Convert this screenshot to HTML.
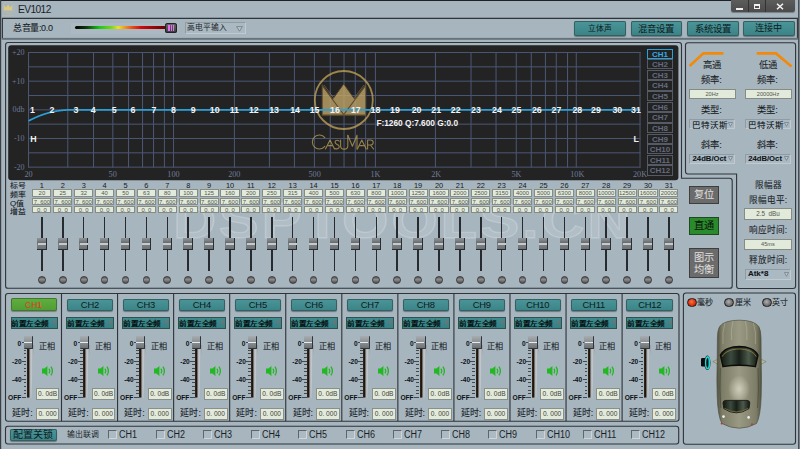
<!DOCTYPE html>
<html lang="zh-CN"><head><meta charset="utf-8"><style>
*{margin:0;padding:0;box-sizing:border-box}
html,body{width:800px;height:449px;overflow:hidden;background:#a7b5bf;font-family:"Liberation Sans", sans-serif;color:#1a1f26}
.ab{position:absolute}
.t{position:absolute;white-space:nowrap;line-height:1}
.c{text-align:center}
.btn{position:absolute;border-radius:2px;background:linear-gradient(#4b9699,#3a8285);box-shadow:0 0 0 1px #346062 inset, 0 1px 1px rgba(0,0,0,.35);color:#0e1a1e;text-align:center;white-space:nowrap}
.box{position:absolute;background:#e1eadb;border:1px solid #868c84;color:#55564c;text-align:center;line-height:1;white-space:nowrap}
.k{-webkit-text-stroke:.08px currentColor}
.sx{transform-origin:0 0}
.dd{position:absolute;border:1px solid;border-color:#8e9ca5 #c0cad0 #c0cad0 #8e9ca5;background:#abb9c3}
</style></head><body>

<svg class="ab" style="left:0;top:0" width="800" height="449" viewBox="0 0 800 449">
<rect x="0" y="0" width="731" height="1" fill="#1e2226"/>
<rect x="0" y="0" width="1.2" height="449" fill="#3a4045"/>
<rect x="798.2" y="0" width="1.2" height="449" fill="#2e3338"/>
<path d="M2.4 39 L2.4 18.4 L797.4 18.4 L797.4 39" fill="none" stroke="#2f3438" stroke-width="1.1"/>
<rect x="1.9" y="37.9" width="796" height="1.9" fill="#65727a"/>
<path d="M5.6 45 Q5.6 42.5 8 42.5 L679 42.5 Q681.5 42.5 681.5 45 L681.5 178.3 L729.5 178.3 Q732.2 178.3 732.2 181 L732.2 286 Q732.2 288.3 729.8 288.3 L8 288.3 Q5.6 288.3 5.6 286 Z" fill="none" stroke="#2f3438" stroke-width="1.1"/>
<path d="M685.5 45.2 Q685.5 42.7 688 42.7 L793 42.7 Q795.6 42.7 795.6 45.2 L795.6 286 Q795.6 288.5 793 288.5 L739 288.5 Q736.6 288.5 736.6 286 L736.6 174 L688 174 Q685.5 174 685.5 171.5 Z" fill="none" stroke="#2f3438" stroke-width="1.1"/>
<path d="M5.5 296 Q5.5 293.5 8 293.5 L676.5 293.5 Q679 293.5 679 296 L679 418.8 Q679 421.2 676.5 421.2 L8 421.2 Q5.5 421.2 5.5 418.8 Z" fill="none" stroke="#2f3438" stroke-width="1.1"/>
<path d="M5.5 428.7 Q5.5 426.3 8 426.3 L676.3 426.3 Q678.7 426.3 678.7 428.7 L678.7 441.5 Q678.7 444 676.3 444 L8 444 Q5.5 444 5.5 441.5 Z" fill="none" stroke="#2f3438" stroke-width="1.1"/>
<path d="M683.4 295.5 Q683.4 293 686 293 L793 293 Q795.5 293 795.5 295.5 L795.5 441.7 Q795.5 444.2 793 444.2 L686 444.2 Q683.4 444.2 683.4 441.7 Z" fill="none" stroke="#2f3438" stroke-width="1.1"/>
<rect x="60.95" y="293.5" width="1.1" height="127.7" fill="#2f3438"/>
<rect x="117.01" y="293.5" width="1.1" height="127.7" fill="#2f3438"/>
<rect x="173.07" y="293.5" width="1.1" height="127.7" fill="#2f3438"/>
<rect x="229.13" y="293.5" width="1.1" height="127.7" fill="#2f3438"/>
<rect x="285.19" y="293.5" width="1.1" height="127.7" fill="#2f3438"/>
<rect x="341.25" y="293.5" width="1.1" height="127.7" fill="#2f3438"/>
<rect x="397.31" y="293.5" width="1.1" height="127.7" fill="#2f3438"/>
<rect x="453.37" y="293.5" width="1.1" height="127.7" fill="#2f3438"/>
<rect x="509.43" y="293.5" width="1.1" height="127.7" fill="#2f3438"/>
<rect x="565.49" y="293.5" width="1.1" height="127.7" fill="#2f3438"/>
<rect x="621.55" y="293.5" width="1.1" height="127.7" fill="#2f3438"/>
<rect x="8.2" y="45.2" width="670.2" height="135" rx="3" fill="#232323"/>
<rect x="28" y="51.98" width="612.5" height="1.05" fill="#4a5572"/>
<rect x="28" y="66.31" width="612.5" height="1.05" fill="#4a5572"/>
<rect x="28" y="80.64" width="612.5" height="1.05" fill="#4a5572"/>
<rect x="28" y="94.97" width="612.5" height="1.05" fill="#4a5572"/>
<rect x="28" y="109.30" width="612.5" height="1.05" fill="#4a5572"/>
<rect x="28" y="123.63" width="612.5" height="1.05" fill="#4a5572"/>
<rect x="28" y="137.96" width="612.5" height="1.05" fill="#4a5572"/>
<rect x="28" y="152.29" width="612.5" height="1.05" fill="#4a5572"/>
<rect x="28" y="166.62" width="612.5" height="1.05" fill="#4a5572"/>
<rect x="28" y="52" width="1.05" height="115.6" fill="#4a5572"/>
<rect x="639.5" y="52" width="1.05" height="115.6" fill="#4a5572"/>
<rect x="67.25" y="52" width="1.05" height="115.6" fill="#4a5572"/>
<rect x="93.00" y="52" width="1.05" height="115.6" fill="#4a5572"/>
<rect x="112.30" y="52" width="1.05" height="115.6" fill="#4a5572"/>
<rect x="128.00" y="52" width="1.05" height="115.6" fill="#4a5572"/>
<rect x="142.00" y="52" width="1.05" height="115.6" fill="#4a5572"/>
<rect x="153.00" y="52" width="1.05" height="115.6" fill="#4a5572"/>
<rect x="163.90" y="52" width="1.05" height="115.6" fill="#4a5572"/>
<rect x="173.00" y="52" width="1.05" height="115.6" fill="#4a5572"/>
<rect x="233.90" y="52" width="1.05" height="115.6" fill="#4a5572"/>
<rect x="268.90" y="52" width="1.05" height="115.6" fill="#4a5572"/>
<rect x="293.90" y="52" width="1.05" height="115.6" fill="#4a5572"/>
<rect x="313.90" y="52" width="1.05" height="115.6" fill="#4a5572"/>
<rect x="329.75" y="52" width="1.05" height="115.6" fill="#4a5572"/>
<rect x="343.50" y="52" width="1.05" height="115.6" fill="#4a5572"/>
<rect x="354.75" y="52" width="1.05" height="115.6" fill="#4a5572"/>
<rect x="365.10" y="52" width="1.05" height="115.6" fill="#4a5572"/>
<rect x="374.90" y="52" width="1.05" height="115.6" fill="#4a5572"/>
<rect x="434.90" y="52" width="1.05" height="115.6" fill="#4a5572"/>
<rect x="470.50" y="52" width="1.05" height="115.6" fill="#4a5572"/>
<rect x="495.50" y="52" width="1.05" height="115.6" fill="#4a5572"/>
<rect x="515.75" y="52" width="1.05" height="115.6" fill="#4a5572"/>
<rect x="530.75" y="52" width="1.05" height="115.6" fill="#4a5572"/>
<rect x="544.90" y="52" width="1.05" height="115.6" fill="#4a5572"/>
<rect x="555.75" y="52" width="1.05" height="115.6" fill="#4a5572"/>
<rect x="567.00" y="52" width="1.05" height="115.6" fill="#4a5572"/>
<rect x="575.75" y="52" width="1.05" height="115.6" fill="#4a5572"/>
<g opacity=".78">
<circle cx="343.8" cy="100" r="29" fill="none" stroke="#c0a25a" stroke-width="1.8"/>
<path d="M322.1 84.5 L332.8 99.1 L343.7 84 L354.6 99.1 L365.8 84.5 L365.8 115.6 L322.1 115.6Z" fill="#c4a86a" stroke="#5a4826" stroke-width="1"/>
<path d="M322.6 86 L343.7 114.5 L365.3 86" fill="none" stroke="#6a5530" stroke-width="1.1"/>
<path d="M324 85 L343.7 111.5 L364 85" fill="none" stroke="#b8a070" stroke-width=".5"/>
<path d="M322.5 115 L365.5 115" stroke="#6a5530" stroke-width="1.2"/>
<g fill="none" stroke="#b89c56" stroke-width="1.1" stroke-linecap="round" stroke-linejoin="round">
<path d="M324.8 137.6 A7 7 0 1 0 324.8 146.4"/>
<path d="M325.5 149 L330 140 L334.5 149 M327.4 145.6 L332.6 145.6"/>
<path d="M339.2 141.2 Q337.5 139.6 335.8 140.6 Q334.6 141.8 335.6 143.4 Q336.6 144.4 338.2 145 Q339.6 146 339 147.8 Q337.8 149.6 334.8 148.4"/>
<path d="M340.6 140 L340.6 146 Q340.6 149.1 344.2 149.1 Q347.8 149.1 347.8 146 L347.8 135.2"/>
<path d="M347.8 135.2 L352.4 146.2 L357 135.2 L357 149"/>
<path d="M357.4 149 L361.8 140 L366.2 149 M359.3 145.6 L364.3 145.6"/>
<path d="M367.6 149 L367.6 140 L370.6 140 Q373.2 140 373.2 142.5 Q373.2 145 370.6 145 L367.6 145 M370.4 145 L373.6 149"/>
</g></g>
<path d="M28.50 121.00 L28.80 120.84 L29.10 120.67 L29.40 120.51 L29.70 120.35 L30.00 120.20 L30.30 120.04 L30.60 119.88 L30.90 119.73 L31.20 119.57 L31.50 119.42 L31.80 119.27 L32.10 119.12 L32.40 118.97 L32.70 118.83 L33.00 118.68 L33.30 118.54 L33.60 118.40 L33.90 118.25 L34.20 118.11 L34.50 117.98 L34.80 117.84 L35.10 117.70 L35.40 117.57 L35.70 117.43 L36.00 117.30 L36.30 117.17 L36.60 117.04 L36.90 116.91 L37.20 116.78 L37.50 116.66 L37.80 116.53 L38.10 116.41 L38.40 116.28 L38.70 116.16 L39.00 116.04 L39.30 115.92 L39.60 115.81 L39.90 115.69 L40.20 115.57 L40.50 115.46 L40.80 115.35 L41.10 115.24 L41.40 115.13 L41.70 115.02 L42.00 114.91 L42.30 114.80 L42.60 114.70 L42.90 114.59 L43.20 114.49 L43.50 114.39 L43.80 114.29 L44.10 114.19 L44.40 114.09 L44.70 114.00 L45.00 113.90 L45.30 113.81 L45.60 113.71 L45.90 113.62 L46.20 113.53 L46.50 113.44 L46.80 113.35 L47.10 113.26 L47.40 113.18 L47.70 113.09 L48.00 113.01 L48.30 112.93 L48.60 112.85 L48.90 112.77 L49.20 112.69 L49.50 112.61 L49.80 112.53 L50.10 112.46 L50.40 112.38 L50.70 112.31 L51.00 112.24 L51.30 112.17 L51.60 112.10 L51.90 112.03 L52.20 111.96 L52.50 111.89 L52.80 111.83 L53.10 111.76 L53.40 111.70 L53.70 111.64 L54.00 111.58 L54.30 111.52 L54.60 111.46 L54.90 111.40 L55.20 111.35 L55.50 111.29 L55.80 111.24 L56.10 111.18 L56.40 111.13 L56.70 111.08 L57.00 111.03 L57.30 110.98 L57.60 110.94 L57.90 110.89 L58.20 110.84 L58.50 110.80 L58.80 110.76 L59.10 110.71 L59.40 110.67 L59.70 110.63 L60.00 110.59 L60.30 110.55 L60.60 110.52 L60.90 110.48 L61.20 110.45 L61.50 110.41 L61.80 110.38 L62.10 110.35 L62.40 110.32 L62.70 110.28 L63.00 110.26 L63.30 110.23 L63.60 110.20 L63.90 110.17 L64.20 110.15 L64.50 110.12 L64.80 110.10 L65.10 110.08 L65.40 110.06 L65.70 110.04 L66.00 110.02 L66.30 110.00 L66.60 109.98 L66.90 109.96 L67.20 109.95 L67.50 109.93 L67.80 109.92 L68.10 109.91 L68.40 109.89 L68.70 109.88 L69.00 109.87 L69.30 109.86 L69.60 109.85 L69.90 109.84 L70.20 109.84 L70.50 109.83 L70.80 109.82 L71.10 109.82 L71.40 109.81 L71.70 109.81 L72.00 109.81 L72.30 109.80 L72.60 109.80 L72.90 109.80 L73.20 109.80 L73.50 109.80 L73.80 109.80 L74.10 109.80 L74.40 109.80 L74.70 109.80 L75.00 109.80 L75.30 109.80 L75.60 109.80 L75.90 109.80 L76.20 109.80 L640 109.8" fill="none" stroke="#2b9fd6" stroke-width="1.7"/>
<path d="M689.6 66 L703.4 53.4 L723.4 53.4" fill="none" stroke="#f28a08" stroke-width="2.6"/><path d="M756.7 53.4 L776 53.4 L791.5 66.5" fill="none" stroke="#f28a08" stroke-width="2.6"/>
</svg>
<svg class="ab" style="left:0;top:0" width="18" height="18" viewBox="0 0 18 18"><circle cx="8.6" cy="7.35" r="5.8" fill="none" stroke="#d4c48a" stroke-width=".7" opacity=".6"/><path d="M3.9 5 L6 7.6 L8.1 4.4 L10.2 7.6 L12.3 5 L12.3 10.5 L3.9 10.5Z" fill="#e2cc7a" opacity=".9"/><rect x="2.6" y="14.8" width="11.4" height="1.6" fill="#cfc08a" opacity=".35"/></svg>
<div class="t" style="left:17.9px;top:4.6px;font-size:10.2px;letter-spacing:-.55px;color:#1a1f26">EV1012</div>
<div class="ab" style="left:730.5px;top:0;width:64.8px;height:12.3px;background:linear-gradient(#5c5c5c,#4b4b4b);border-radius:0 0 2px 2px;box-shadow:0 1px 1px rgba(0,0,0,.3)"></div>
<div class="ab" style="left:748px;top:0;width:1px;height:12px;background:#333"></div>
<div class="ab" style="left:765px;top:0;width:1px;height:12px;background:#333"></div>
<div class="ab" style="left:736px;top:7.5px;width:6.5px;height:2px;background:#f0f0f0"></div>
<div class="ab" style="left:753.8px;top:4px;width:6.3px;height:5px;border:1px solid #f0f0f0;border-top-width:2px"></div>
<svg class="ab" style="left:776px;top:3.3px" width="8" height="7" viewBox="0 0 8 7"><path d="M1 .7 L7 6.3 M7 .7 L1 6.3" stroke="#f4f4f4" stroke-width="1.5"/></svg>
<div class="t k" style="left:12.9px;top:24.3px;font-size:9px;letter-spacing:-.32px;color:#1a1f26">总音量:0.0</div>
<div class="ab" style="left:71px;top:22.5px;width:108px;height:11px;background:rgba(255,255,255,.06)"></div>
<div class="ab" style="left:75px;top:26.4px;width:92px;height:3px;border-radius:1.5px;background:linear-gradient(90deg,#000 0%,#0a3a0a 12%,#1cc81c 27%,#7ad81a 40%,#f0e020 47%,#e8501a 62%,#d00a0a 72%,#600000 100%)"></div>
<div class="ab" style="left:165.3px;top:23px;width:11.7px;height:9.8px;border-radius:2.5px;background:linear-gradient(#6a6a6a,#3c3c3c);box-shadow:0 0 0 1px #222 inset"></div>
<div class="ab" style="left:168.3px;top:25.1px;width:1.5px;height:5.6px;background:#e070f0"></div>
<div class="ab" style="left:170.5px;top:25.1px;width:1.5px;height:5.6px;background:#e070f0"></div>
<div class="ab" style="left:172.7px;top:25.1px;width:1.5px;height:5.6px;background:#e070f0"></div>
<div class="dd" style="left:184.8px;top:22px;width:60.8px;height:11.7px"></div>
<div class="t" style="left:186.6px;top:23.6px;font-size:7.8px;color:#1a1f26">高电平输入</div>
<svg class="ab" style="left:236px;top:25.6px" width="7" height="6" viewBox="0 0 7 6"><path d="M0.6 .6 L6.4 .6 L3.5 5.2Z" fill="#b8c2c8" stroke="#6f7b84" stroke-width=".8"/></svg>
<div class="btn" style="left:574px;top:20.8px;width:52.0px;height:15px;line-height:15px;font-size:7.8px">立体声</div>
<div class="btn" style="left:630.5px;top:20.8px;width:51.5px;height:15px;line-height:15px;font-size:9.4px">混音设置</div>
<div class="btn" style="left:687px;top:20.8px;width:51.5px;height:15px;line-height:15px;font-size:9.4px">系统设置</div>
<div class="btn" style="left:743.2px;top:20.8px;width:51.5px;height:15px;line-height:15px;font-size:9.1px">连接中</div>
<div class="t" style="left:0;width:24.6px;text-align:right;top:48.9px;font-size:8px;font-family:'Liberation Serif',serif;color:#6c7896">+20</div>
<div class="t" style="left:0;width:24.6px;text-align:right;top:77.6px;font-size:8px;font-family:'Liberation Serif',serif;color:#6c7896">+10</div>
<div class="t" style="left:0;width:24.6px;text-align:right;top:106.2px;font-size:8px;font-family:'Liberation Serif',serif;color:#6c7896">0db</div>
<div class="t" style="left:0;width:24.6px;text-align:right;top:134.9px;font-size:8px;font-family:'Liberation Serif',serif;color:#6c7896">-10</div>
<div class="t" style="left:0;width:24.6px;text-align:right;top:163.5px;font-size:8px;font-family:'Liberation Serif',serif;color:#6c7896">-20</div>
<div class="t c" style="left:8.5px;width:40px;top:170.7px;font-size:8.2px;font-family:'Liberation Serif',serif;color:#6f7c99">20</div>
<div class="t c" style="left:92.7px;width:40px;top:170.7px;font-size:8.2px;font-family:'Liberation Serif',serif;color:#6f7c99">50</div>
<div class="t c" style="left:153.5px;width:40px;top:170.7px;font-size:8.2px;font-family:'Liberation Serif',serif;color:#6f7c99">100</div>
<div class="t c" style="left:214.3px;width:40px;top:170.7px;font-size:8.2px;font-family:'Liberation Serif',serif;color:#6f7c99">200</div>
<div class="t c" style="left:294.6px;width:40px;top:170.7px;font-size:8.2px;font-family:'Liberation Serif',serif;color:#6f7c99">500</div>
<div class="t c" style="left:355.4px;width:40px;top:170.7px;font-size:8.2px;font-family:'Liberation Serif',serif;color:#6f7c99">1K</div>
<div class="t c" style="left:416.2px;width:40px;top:170.7px;font-size:8.2px;font-family:'Liberation Serif',serif;color:#6f7c99">2K</div>
<div class="t c" style="left:496.5px;width:40px;top:170.7px;font-size:8.2px;font-family:'Liberation Serif',serif;color:#6f7c99">5K</div>
<div class="t c" style="left:557.3px;width:40px;top:170.7px;font-size:8.2px;font-family:'Liberation Serif',serif;color:#6f7c99">10K</div>
<div class="t c" style="left:620.0px;width:40px;top:170.7px;font-size:8.2px;font-family:'Liberation Serif',serif;color:#6f7c99">20K</div>
<div class="t c" style="left:22.4px;width:20px;top:106.1px;font-size:8.8px;font-weight:bold;color:#f4f4f4">1</div>
<div class="t c" style="left:41.9px;width:20px;top:106.1px;font-size:8.8px;font-weight:bold;color:#f4f4f4">2</div>
<div class="t c" style="left:66.0px;width:20px;top:106.1px;font-size:8.8px;font-weight:bold;color:#f4f4f4">3</div>
<div class="t c" style="left:83.2px;width:20px;top:106.1px;font-size:8.8px;font-weight:bold;color:#f4f4f4">4</div>
<div class="t c" style="left:104.1px;width:20px;top:106.1px;font-size:8.8px;font-weight:bold;color:#f4f4f4">5</div>
<div class="t c" style="left:123.0px;width:20px;top:106.1px;font-size:8.8px;font-weight:bold;color:#f4f4f4">6</div>
<div class="t c" style="left:143.9px;width:20px;top:106.1px;font-size:8.8px;font-weight:bold;color:#f4f4f4">7</div>
<div class="t c" style="left:163.5px;width:20px;top:106.1px;font-size:8.8px;font-weight:bold;color:#f4f4f4">8</div>
<div class="t c" style="left:183.1px;width:20px;top:106.1px;font-size:8.8px;font-weight:bold;color:#f4f4f4">9</div>
<div class="t c" style="left:204.7px;width:20px;top:106.1px;font-size:8.8px;font-weight:bold;color:#f4f4f4">10</div>
<div class="t c" style="left:224.3px;width:20px;top:106.1px;font-size:8.8px;font-weight:bold;color:#f4f4f4">11</div>
<div class="t c" style="left:243.8px;width:20px;top:106.1px;font-size:8.8px;font-weight:bold;color:#f4f4f4">12</div>
<div class="t c" style="left:264.1px;width:20px;top:106.1px;font-size:8.8px;font-weight:bold;color:#f4f4f4">13</div>
<div class="t c" style="left:285.1px;width:20px;top:106.1px;font-size:8.8px;font-weight:bold;color:#f4f4f4">14</div>
<div class="t c" style="left:304.6px;width:20px;top:106.1px;font-size:8.8px;font-weight:bold;color:#f4f4f4">15</div>
<div class="t c" style="left:324.9px;width:20px;top:106.1px;font-size:8.8px;font-weight:bold;color:#f4f4f4">16</div>
<div class="t c" style="left:345.8px;width:20px;top:106.1px;font-size:8.8px;font-weight:bold;color:#f4f4f4">17</div>
<div class="t c" style="left:365.4px;width:20px;top:106.1px;font-size:8.8px;font-weight:bold;color:#f4f4f4">18</div>
<div class="t c" style="left:385.0px;width:20px;top:106.1px;font-size:8.8px;font-weight:bold;color:#f4f4f4">19</div>
<div class="t c" style="left:406.6px;width:20px;top:106.1px;font-size:8.8px;font-weight:bold;color:#f4f4f4">20</div>
<div class="t c" style="left:426.2px;width:20px;top:106.1px;font-size:8.8px;font-weight:bold;color:#f4f4f4">21</div>
<div class="t c" style="left:445.7px;width:20px;top:106.1px;font-size:8.8px;font-weight:bold;color:#f4f4f4">22</div>
<div class="t c" style="left:466.0px;width:20px;top:106.1px;font-size:8.8px;font-weight:bold;color:#f4f4f4">23</div>
<div class="t c" style="left:487.0px;width:20px;top:106.1px;font-size:8.8px;font-weight:bold;color:#f4f4f4">24</div>
<div class="t c" style="left:506.5px;width:20px;top:106.1px;font-size:8.8px;font-weight:bold;color:#f4f4f4">25</div>
<div class="t c" style="left:526.8px;width:20px;top:106.1px;font-size:8.8px;font-weight:bold;color:#f4f4f4">26</div>
<div class="t c" style="left:546.5px;width:20px;top:106.1px;font-size:8.8px;font-weight:bold;color:#f4f4f4">27</div>
<div class="t c" style="left:567.3px;width:20px;top:106.1px;font-size:8.8px;font-weight:bold;color:#f4f4f4">28</div>
<div class="t c" style="left:585.9px;width:20px;top:106.1px;font-size:8.8px;font-weight:bold;color:#f4f4f4">29</div>
<div class="t c" style="left:607.3px;width:20px;top:106.1px;font-size:8.8px;font-weight:bold;color:#f4f4f4">30</div>
<div class="t c" style="left:626.0px;width:20px;top:106.1px;font-size:8.8px;font-weight:bold;color:#f4f4f4">31</div>
<div class="t" style="left:30.2px;top:134.6px;font-size:8.8px;font-weight:bold;color:#f2f2f2">H</div>
<div class="t" style="left:633.6px;top:134.6px;font-size:8.8px;font-weight:bold;color:#f2f2f2">L</div>
<div class="t" style="left:376.4px;top:118.6px;font-size:8.3px;font-weight:bold;color:#f2f2f2">F:1260 Q:7.600 G:0.0</div>
<div class="ab c" style="left:647px;top:48.60px;width:26px;height:10.2px;border:1.1px solid #2aa0d8;color:#32ace6;font-size:8px;font-weight:bold;line-height:9.2px">CH1</div>
<div class="ab c" style="left:647px;top:59.22px;width:26px;height:10.2px;border:1.1px solid #545a66;color:#646b7d;font-size:8px;font-weight:bold;line-height:9.2px">CH2</div>
<div class="ab c" style="left:647px;top:69.84px;width:26px;height:10.2px;border:1.1px solid #545a66;color:#646b7d;font-size:8px;font-weight:bold;line-height:9.2px">CH3</div>
<div class="ab c" style="left:647px;top:80.46px;width:26px;height:10.2px;border:1.1px solid #545a66;color:#646b7d;font-size:8px;font-weight:bold;line-height:9.2px">CH4</div>
<div class="ab c" style="left:647px;top:91.08px;width:26px;height:10.2px;border:1.1px solid #545a66;color:#646b7d;font-size:8px;font-weight:bold;line-height:9.2px">CH5</div>
<div class="ab c" style="left:647px;top:101.70px;width:26px;height:10.2px;border:1.1px solid #545a66;color:#646b7d;font-size:8px;font-weight:bold;line-height:9.2px">CH6</div>
<div class="ab c" style="left:647px;top:112.32px;width:26px;height:10.2px;border:1.1px solid #545a66;color:#646b7d;font-size:8px;font-weight:bold;line-height:9.2px">CH7</div>
<div class="ab c" style="left:647px;top:122.94px;width:26px;height:10.2px;border:1.1px solid #545a66;color:#646b7d;font-size:8px;font-weight:bold;line-height:9.2px">CH8</div>
<div class="ab c" style="left:647px;top:133.56px;width:26px;height:10.2px;border:1.1px solid #545a66;color:#646b7d;font-size:8px;font-weight:bold;line-height:9.2px">CH9</div>
<div class="ab c" style="left:647px;top:144.18px;width:26px;height:10.2px;border:1.1px solid #545a66;color:#646b7d;font-size:8px;font-weight:bold;line-height:9.2px">CH10</div>
<div class="ab c" style="left:647px;top:154.80px;width:26px;height:10.2px;border:1.1px solid #545a66;color:#646b7d;font-size:8px;font-weight:bold;line-height:9.2px">CH11</div>
<div class="ab c" style="left:647px;top:165.42px;width:26px;height:10.2px;border:1.1px solid #545a66;color:#646b7d;font-size:8px;font-weight:bold;line-height:9.2px">CH12</div>
<div class="t c k" style="left:691.5px;width:40px;top:60.5px;font-size:9.3px">高通</div>
<div class="t c k" style="left:691.5px;width:40px;top:75.9px;font-size:9.3px">频率:</div>
<div class="t c k" style="left:691.5px;width:40px;top:105.6px;font-size:9.3px">类型:</div>
<div class="t c k" style="left:691.5px;width:40px;top:141.2px;font-size:9.3px">斜率:</div>
<div class="t c k" style="left:747.5px;width:40px;top:60.5px;font-size:9.3px">低通</div>
<div class="t c k" style="left:747.5px;width:40px;top:75.9px;font-size:9.3px">频率:</div>
<div class="t c k" style="left:747.5px;width:40px;top:105.6px;font-size:9.3px">类型:</div>
<div class="t c k" style="left:747.5px;width:40px;top:141.2px;font-size:9.3px">斜率:</div>
<div class="box" style="left:688.5px;top:88.6px;width:47px;height:10.8px;font-size:5.6px;line-height:8.8px">20Hz</div>
<div class="box" style="left:744.5px;top:88.6px;width:47px;height:10.8px;font-size:5.6px;line-height:8.8px">20000Hz</div>
<div class="dd" style="left:689.4px;top:119.3px;width:45.8px;height:9.9px"></div>
<div class="t k" style="left:692.1999999999999px;top:121.2px;font-size:8.5px;font-weight:normal;color:#101418">巴特沃斯</div>
<svg class="ab" style="left:727.9999999999999px;top:121.95px" width="5" height="5" viewBox="0 0 5 5"><path d="M.4 .5 L4.6 .5 L2.5 4.4Z" fill="#b8c2c8" stroke="#6f7b84" stroke-width=".7"/></svg>
<div class="dd" style="left:745px;top:119.3px;width:46px;height:9.9px"></div>
<div class="t k" style="left:747.8px;top:121.2px;font-size:8.5px;font-weight:normal;color:#101418">巴特沃斯</div>
<svg class="ab" style="left:783.8px;top:121.95px" width="5" height="5" viewBox="0 0 5 5"><path d="M.4 .5 L4.6 .5 L2.5 4.4Z" fill="#b8c2c8" stroke="#6f7b84" stroke-width=".7"/></svg>
<div class="dd" style="left:689.4px;top:153.5px;width:45.8px;height:10.4px"></div>
<div class="t k" style="left:692.6px;top:155.1px;font-size:7.7px;font-weight:bold;color:#101418">24dB/Oct</div>
<svg class="ab" style="left:727.9999999999999px;top:156.39999999999998px" width="5" height="5" viewBox="0 0 5 5"><path d="M.4 .5 L4.6 .5 L2.5 4.4Z" fill="#b8c2c8" stroke="#6f7b84" stroke-width=".7"/></svg>
<div class="dd" style="left:745px;top:153.5px;width:46px;height:10.4px"></div>
<div class="t k" style="left:748.2px;top:155.1px;font-size:7.7px;font-weight:bold;color:#101418">24dB/Oct</div>
<svg class="ab" style="left:783.8px;top:156.39999999999998px" width="5" height="5" viewBox="0 0 5 5"><path d="M.4 .5 L4.6 .5 L2.5 4.4Z" fill="#b8c2c8" stroke="#6f7b84" stroke-width=".7"/></svg>
<div class="t c k" style="left:738px;width:60px;top:181.0px;font-size:8.6px">限幅器</div>
<div class="t c k" style="left:738px;width:60px;top:195.8px;font-size:8.6px">限幅电平:</div>
<div class="t c k" style="left:738px;width:60px;top:225.9px;font-size:8.6px">响应时间:</div>
<div class="t c k" style="left:738px;width:60px;top:256.2px;font-size:8.6px">释放时间:</div>
<div class="box" style="left:744.3px;top:208.2px;width:47.3px;height:11.7px;font-size:6.3px;line-height:9.8px">2.5&nbsp; dBu</div>
<div class="box" style="left:744.3px;top:238.6px;width:47.3px;height:11.4px;font-size:5.6px;line-height:9.6px">45ms</div>
<div class="dd" style="left:745.3px;top:269px;width:45.5px;height:10.6px"></div>
<div class="t k" style="left:747.9px;top:270.4px;font-size:8px;font-weight:bold;color:#101418">Atk*8</div>
<svg class="ab" style="left:783.5999999999999px;top:272.0px" width="5" height="5" viewBox="0 0 5 5"><path d="M.4 .5 L4.6 .5 L2.5 4.4Z" fill="#b8c2c8" stroke="#6f7b84" stroke-width=".7"/></svg>
<div class="ab c" style="left:689.3px;top:185.8px;width:29.7px;height:17.8px;background:#6b6b6b;border:1px solid #3e3e3e;color:#e0e0e0;font-size:10.2px;line-height:16.4px">复位</div>
<div class="ab c" style="left:689.3px;top:217.3px;width:29.7px;height:17.4px;background:#2a8a2c;border:1px solid #1d4a1e;color:#0a120a;font-size:10.2px;line-height:15.9px">直通</div>
<div class="ab c" style="left:689.3px;top:248.2px;width:29.7px;height:29.5px;background:#6b6b6b;border:1px solid #3e3e3e;color:#e0e0e0;font-size:10.2px;line-height:11.7px;padding-top:2.8px">图示<br>均衡</div>
<div class="t" style="left:172.5px;top:195.7px;font-size:50px;font-weight:bold;letter-spacing:2.1px;transform:scaleX(1.2);transform-origin:0 0;color:rgba(255,255,255,.12);-webkit-text-stroke:1.3px rgba(255,255,255,.2)">DSPTOOLS.CN</div>
<div class="t k" style="left:10.4px;top:182.3px;font-size:7px;transform:scaleX(1.13);transform-origin:0 0;color:#15191e">标号</div>
<div class="t k" style="left:10.4px;top:190.9px;font-size:7px;transform:scaleX(1.13);transform-origin:0 0;color:#15191e">频率</div>
<div class="t k" style="left:10.4px;top:199.5px;font-size:7px;transform:scaleX(1.13);transform-origin:0 0;color:#15191e">Q值</div>
<div class="t k" style="left:10.4px;top:208.3px;font-size:7px;transform:scaleX(1.13);transform-origin:0 0;color:#15191e">增益</div>
<div class="t c" style="left:31.90px;width:20px;top:181.6px;font-size:7.4px;color:#15191e">1</div>
<div class="box" style="left:32.30px;top:189.4px;width:19.2px;height:7.2px;font-size:5.9px;line-height:6.2px">20</div>
<div class="box" style="left:32.30px;top:197.8px;width:19.2px;height:7.2px;font-size:5.9px;line-height:6.2px">7. 600</div>
<div class="box" style="left:32.30px;top:206.0px;width:19.2px;height:7.2px;font-size:5.9px;line-height:6.2px">0. 0</div>
<div class="ab" style="left:41.10px;top:217px;width:1.6px;height:53.5px;background:#272b2f"></div>
<div class="ab" style="left:37.10px;top:237.9px;width:9.6px;height:11.7px;background:linear-gradient(#8c9296 0,#7e8488 20%,#686e72 40%,#7a8084 60%,#6c7276);border-right:1.3px solid #2a2e31;border-bottom:1.3px solid #2a2e31"></div>
<div class="ab" style="left:37.70px;top:243px;width:8px;height:1.7px;background:#c6cacb"></div>
<div class="ab" style="left:38.00px;top:276px;width:7.8px;height:7.8px;border-radius:50%;background:linear-gradient(#5a5a5a,#8c8c8c 40%,#7a7a7a 60%,#4e4e4e);border:1.1px solid #3a3a3a"></div>
<div class="t c" style="left:52.80px;width:20px;top:181.6px;font-size:7.4px;color:#15191e">2</div>
<div class="box" style="left:53.20px;top:189.4px;width:19.2px;height:7.2px;font-size:5.9px;line-height:6.2px">25</div>
<div class="box" style="left:53.20px;top:197.8px;width:19.2px;height:7.2px;font-size:5.9px;line-height:6.2px">7. 600</div>
<div class="box" style="left:53.20px;top:206.0px;width:19.2px;height:7.2px;font-size:5.9px;line-height:6.2px">0. 0</div>
<div class="ab" style="left:62.00px;top:217px;width:1.6px;height:53.5px;background:#272b2f"></div>
<div class="ab" style="left:58.00px;top:237.9px;width:9.6px;height:11.7px;background:linear-gradient(#8c9296 0,#7e8488 20%,#686e72 40%,#7a8084 60%,#6c7276);border-right:1.3px solid #2a2e31;border-bottom:1.3px solid #2a2e31"></div>
<div class="ab" style="left:58.60px;top:243px;width:8px;height:1.7px;background:#c6cacb"></div>
<div class="ab" style="left:58.90px;top:276px;width:7.8px;height:7.8px;border-radius:50%;background:linear-gradient(#5a5a5a,#8c8c8c 40%,#7a7a7a 60%,#4e4e4e);border:1.1px solid #3a3a3a"></div>
<div class="t c" style="left:73.70px;width:20px;top:181.6px;font-size:7.4px;color:#15191e">3</div>
<div class="box" style="left:74.10px;top:189.4px;width:19.2px;height:7.2px;font-size:5.9px;line-height:6.2px">32</div>
<div class="box" style="left:74.10px;top:197.8px;width:19.2px;height:7.2px;font-size:5.9px;line-height:6.2px">7. 600</div>
<div class="box" style="left:74.10px;top:206.0px;width:19.2px;height:7.2px;font-size:5.9px;line-height:6.2px">0. 0</div>
<div class="ab" style="left:82.90px;top:217px;width:1.6px;height:53.5px;background:#272b2f"></div>
<div class="ab" style="left:78.90px;top:237.9px;width:9.6px;height:11.7px;background:linear-gradient(#8c9296 0,#7e8488 20%,#686e72 40%,#7a8084 60%,#6c7276);border-right:1.3px solid #2a2e31;border-bottom:1.3px solid #2a2e31"></div>
<div class="ab" style="left:79.50px;top:243px;width:8px;height:1.7px;background:#c6cacb"></div>
<div class="ab" style="left:79.80px;top:276px;width:7.8px;height:7.8px;border-radius:50%;background:linear-gradient(#5a5a5a,#8c8c8c 40%,#7a7a7a 60%,#4e4e4e);border:1.1px solid #3a3a3a"></div>
<div class="t c" style="left:94.60px;width:20px;top:181.6px;font-size:7.4px;color:#15191e">4</div>
<div class="box" style="left:95.00px;top:189.4px;width:19.2px;height:7.2px;font-size:5.9px;line-height:6.2px">40</div>
<div class="box" style="left:95.00px;top:197.8px;width:19.2px;height:7.2px;font-size:5.9px;line-height:6.2px">7. 600</div>
<div class="box" style="left:95.00px;top:206.0px;width:19.2px;height:7.2px;font-size:5.9px;line-height:6.2px">0. 0</div>
<div class="ab" style="left:103.80px;top:217px;width:1.6px;height:53.5px;background:#272b2f"></div>
<div class="ab" style="left:99.80px;top:237.9px;width:9.6px;height:11.7px;background:linear-gradient(#8c9296 0,#7e8488 20%,#686e72 40%,#7a8084 60%,#6c7276);border-right:1.3px solid #2a2e31;border-bottom:1.3px solid #2a2e31"></div>
<div class="ab" style="left:100.40px;top:243px;width:8px;height:1.7px;background:#c6cacb"></div>
<div class="ab" style="left:100.70px;top:276px;width:7.8px;height:7.8px;border-radius:50%;background:linear-gradient(#5a5a5a,#8c8c8c 40%,#7a7a7a 60%,#4e4e4e);border:1.1px solid #3a3a3a"></div>
<div class="t c" style="left:115.50px;width:20px;top:181.6px;font-size:7.4px;color:#15191e">5</div>
<div class="box" style="left:115.90px;top:189.4px;width:19.2px;height:7.2px;font-size:5.9px;line-height:6.2px">50</div>
<div class="box" style="left:115.90px;top:197.8px;width:19.2px;height:7.2px;font-size:5.9px;line-height:6.2px">7. 600</div>
<div class="box" style="left:115.90px;top:206.0px;width:19.2px;height:7.2px;font-size:5.9px;line-height:6.2px">0. 0</div>
<div class="ab" style="left:124.70px;top:217px;width:1.6px;height:53.5px;background:#272b2f"></div>
<div class="ab" style="left:120.70px;top:237.9px;width:9.6px;height:11.7px;background:linear-gradient(#8c9296 0,#7e8488 20%,#686e72 40%,#7a8084 60%,#6c7276);border-right:1.3px solid #2a2e31;border-bottom:1.3px solid #2a2e31"></div>
<div class="ab" style="left:121.30px;top:243px;width:8px;height:1.7px;background:#c6cacb"></div>
<div class="ab" style="left:121.60px;top:276px;width:7.8px;height:7.8px;border-radius:50%;background:linear-gradient(#5a5a5a,#8c8c8c 40%,#7a7a7a 60%,#4e4e4e);border:1.1px solid #3a3a3a"></div>
<div class="t c" style="left:136.40px;width:20px;top:181.6px;font-size:7.4px;color:#15191e">6</div>
<div class="box" style="left:136.80px;top:189.4px;width:19.2px;height:7.2px;font-size:5.9px;line-height:6.2px">63</div>
<div class="box" style="left:136.80px;top:197.8px;width:19.2px;height:7.2px;font-size:5.9px;line-height:6.2px">7. 600</div>
<div class="box" style="left:136.80px;top:206.0px;width:19.2px;height:7.2px;font-size:5.9px;line-height:6.2px">0. 0</div>
<div class="ab" style="left:145.60px;top:217px;width:1.6px;height:53.5px;background:#272b2f"></div>
<div class="ab" style="left:141.60px;top:237.9px;width:9.6px;height:11.7px;background:linear-gradient(#8c9296 0,#7e8488 20%,#686e72 40%,#7a8084 60%,#6c7276);border-right:1.3px solid #2a2e31;border-bottom:1.3px solid #2a2e31"></div>
<div class="ab" style="left:142.20px;top:243px;width:8px;height:1.7px;background:#c6cacb"></div>
<div class="ab" style="left:142.50px;top:276px;width:7.8px;height:7.8px;border-radius:50%;background:linear-gradient(#5a5a5a,#8c8c8c 40%,#7a7a7a 60%,#4e4e4e);border:1.1px solid #3a3a3a"></div>
<div class="t c" style="left:157.30px;width:20px;top:181.6px;font-size:7.4px;color:#15191e">7</div>
<div class="box" style="left:157.70px;top:189.4px;width:19.2px;height:7.2px;font-size:5.9px;line-height:6.2px">80</div>
<div class="box" style="left:157.70px;top:197.8px;width:19.2px;height:7.2px;font-size:5.9px;line-height:6.2px">7. 600</div>
<div class="box" style="left:157.70px;top:206.0px;width:19.2px;height:7.2px;font-size:5.9px;line-height:6.2px">0. 0</div>
<div class="ab" style="left:166.50px;top:217px;width:1.6px;height:53.5px;background:#272b2f"></div>
<div class="ab" style="left:162.50px;top:237.9px;width:9.6px;height:11.7px;background:linear-gradient(#8c9296 0,#7e8488 20%,#686e72 40%,#7a8084 60%,#6c7276);border-right:1.3px solid #2a2e31;border-bottom:1.3px solid #2a2e31"></div>
<div class="ab" style="left:163.10px;top:243px;width:8px;height:1.7px;background:#c6cacb"></div>
<div class="ab" style="left:163.40px;top:276px;width:7.8px;height:7.8px;border-radius:50%;background:linear-gradient(#5a5a5a,#8c8c8c 40%,#7a7a7a 60%,#4e4e4e);border:1.1px solid #3a3a3a"></div>
<div class="t c" style="left:178.20px;width:20px;top:181.6px;font-size:7.4px;color:#15191e">8</div>
<div class="box" style="left:178.60px;top:189.4px;width:19.2px;height:7.2px;font-size:5.9px;line-height:6.2px">100</div>
<div class="box" style="left:178.60px;top:197.8px;width:19.2px;height:7.2px;font-size:5.9px;line-height:6.2px">7. 600</div>
<div class="box" style="left:178.60px;top:206.0px;width:19.2px;height:7.2px;font-size:5.9px;line-height:6.2px">0. 0</div>
<div class="ab" style="left:187.40px;top:217px;width:1.6px;height:53.5px;background:#272b2f"></div>
<div class="ab" style="left:183.40px;top:237.9px;width:9.6px;height:11.7px;background:linear-gradient(#8c9296 0,#7e8488 20%,#686e72 40%,#7a8084 60%,#6c7276);border-right:1.3px solid #2a2e31;border-bottom:1.3px solid #2a2e31"></div>
<div class="ab" style="left:184.00px;top:243px;width:8px;height:1.7px;background:#c6cacb"></div>
<div class="ab" style="left:184.30px;top:276px;width:7.8px;height:7.8px;border-radius:50%;background:linear-gradient(#5a5a5a,#8c8c8c 40%,#7a7a7a 60%,#4e4e4e);border:1.1px solid #3a3a3a"></div>
<div class="t c" style="left:199.10px;width:20px;top:181.6px;font-size:7.4px;color:#15191e">9</div>
<div class="box" style="left:199.50px;top:189.4px;width:19.2px;height:7.2px;font-size:5.9px;line-height:6.2px">125</div>
<div class="box" style="left:199.50px;top:197.8px;width:19.2px;height:7.2px;font-size:5.9px;line-height:6.2px">7. 600</div>
<div class="box" style="left:199.50px;top:206.0px;width:19.2px;height:7.2px;font-size:5.9px;line-height:6.2px">0. 0</div>
<div class="ab" style="left:208.30px;top:217px;width:1.6px;height:53.5px;background:#272b2f"></div>
<div class="ab" style="left:204.30px;top:237.9px;width:9.6px;height:11.7px;background:linear-gradient(#8c9296 0,#7e8488 20%,#686e72 40%,#7a8084 60%,#6c7276);border-right:1.3px solid #2a2e31;border-bottom:1.3px solid #2a2e31"></div>
<div class="ab" style="left:204.90px;top:243px;width:8px;height:1.7px;background:#c6cacb"></div>
<div class="ab" style="left:205.20px;top:276px;width:7.8px;height:7.8px;border-radius:50%;background:linear-gradient(#5a5a5a,#8c8c8c 40%,#7a7a7a 60%,#4e4e4e);border:1.1px solid #3a3a3a"></div>
<div class="t c" style="left:220.00px;width:20px;top:181.6px;font-size:7.4px;color:#15191e">10</div>
<div class="box" style="left:220.40px;top:189.4px;width:19.2px;height:7.2px;font-size:5.9px;line-height:6.2px">160</div>
<div class="box" style="left:220.40px;top:197.8px;width:19.2px;height:7.2px;font-size:5.9px;line-height:6.2px">7. 600</div>
<div class="box" style="left:220.40px;top:206.0px;width:19.2px;height:7.2px;font-size:5.9px;line-height:6.2px">0. 0</div>
<div class="ab" style="left:229.20px;top:217px;width:1.6px;height:53.5px;background:#272b2f"></div>
<div class="ab" style="left:225.20px;top:237.9px;width:9.6px;height:11.7px;background:linear-gradient(#8c9296 0,#7e8488 20%,#686e72 40%,#7a8084 60%,#6c7276);border-right:1.3px solid #2a2e31;border-bottom:1.3px solid #2a2e31"></div>
<div class="ab" style="left:225.80px;top:243px;width:8px;height:1.7px;background:#c6cacb"></div>
<div class="ab" style="left:226.10px;top:276px;width:7.8px;height:7.8px;border-radius:50%;background:linear-gradient(#5a5a5a,#8c8c8c 40%,#7a7a7a 60%,#4e4e4e);border:1.1px solid #3a3a3a"></div>
<div class="t c" style="left:240.90px;width:20px;top:181.6px;font-size:7.4px;color:#15191e">11</div>
<div class="box" style="left:241.30px;top:189.4px;width:19.2px;height:7.2px;font-size:5.9px;line-height:6.2px">200</div>
<div class="box" style="left:241.30px;top:197.8px;width:19.2px;height:7.2px;font-size:5.9px;line-height:6.2px">7. 600</div>
<div class="box" style="left:241.30px;top:206.0px;width:19.2px;height:7.2px;font-size:5.9px;line-height:6.2px">0. 0</div>
<div class="ab" style="left:250.10px;top:217px;width:1.6px;height:53.5px;background:#272b2f"></div>
<div class="ab" style="left:246.10px;top:237.9px;width:9.6px;height:11.7px;background:linear-gradient(#8c9296 0,#7e8488 20%,#686e72 40%,#7a8084 60%,#6c7276);border-right:1.3px solid #2a2e31;border-bottom:1.3px solid #2a2e31"></div>
<div class="ab" style="left:246.70px;top:243px;width:8px;height:1.7px;background:#c6cacb"></div>
<div class="ab" style="left:247.00px;top:276px;width:7.8px;height:7.8px;border-radius:50%;background:linear-gradient(#5a5a5a,#8c8c8c 40%,#7a7a7a 60%,#4e4e4e);border:1.1px solid #3a3a3a"></div>
<div class="t c" style="left:261.80px;width:20px;top:181.6px;font-size:7.4px;color:#15191e">12</div>
<div class="box" style="left:262.20px;top:189.4px;width:19.2px;height:7.2px;font-size:5.9px;line-height:6.2px">250</div>
<div class="box" style="left:262.20px;top:197.8px;width:19.2px;height:7.2px;font-size:5.9px;line-height:6.2px">7. 600</div>
<div class="box" style="left:262.20px;top:206.0px;width:19.2px;height:7.2px;font-size:5.9px;line-height:6.2px">0. 0</div>
<div class="ab" style="left:271.00px;top:217px;width:1.6px;height:53.5px;background:#272b2f"></div>
<div class="ab" style="left:267.00px;top:237.9px;width:9.6px;height:11.7px;background:linear-gradient(#8c9296 0,#7e8488 20%,#686e72 40%,#7a8084 60%,#6c7276);border-right:1.3px solid #2a2e31;border-bottom:1.3px solid #2a2e31"></div>
<div class="ab" style="left:267.60px;top:243px;width:8px;height:1.7px;background:#c6cacb"></div>
<div class="ab" style="left:267.90px;top:276px;width:7.8px;height:7.8px;border-radius:50%;background:linear-gradient(#5a5a5a,#8c8c8c 40%,#7a7a7a 60%,#4e4e4e);border:1.1px solid #3a3a3a"></div>
<div class="t c" style="left:282.70px;width:20px;top:181.6px;font-size:7.4px;color:#15191e">13</div>
<div class="box" style="left:283.10px;top:189.4px;width:19.2px;height:7.2px;font-size:5.9px;line-height:6.2px">315</div>
<div class="box" style="left:283.10px;top:197.8px;width:19.2px;height:7.2px;font-size:5.9px;line-height:6.2px">7. 600</div>
<div class="box" style="left:283.10px;top:206.0px;width:19.2px;height:7.2px;font-size:5.9px;line-height:6.2px">0. 0</div>
<div class="ab" style="left:291.90px;top:217px;width:1.6px;height:53.5px;background:#272b2f"></div>
<div class="ab" style="left:287.90px;top:237.9px;width:9.6px;height:11.7px;background:linear-gradient(#8c9296 0,#7e8488 20%,#686e72 40%,#7a8084 60%,#6c7276);border-right:1.3px solid #2a2e31;border-bottom:1.3px solid #2a2e31"></div>
<div class="ab" style="left:288.50px;top:243px;width:8px;height:1.7px;background:#c6cacb"></div>
<div class="ab" style="left:288.80px;top:276px;width:7.8px;height:7.8px;border-radius:50%;background:linear-gradient(#5a5a5a,#8c8c8c 40%,#7a7a7a 60%,#4e4e4e);border:1.1px solid #3a3a3a"></div>
<div class="t c" style="left:303.60px;width:20px;top:181.6px;font-size:7.4px;color:#15191e">14</div>
<div class="box" style="left:304.00px;top:189.4px;width:19.2px;height:7.2px;font-size:5.9px;line-height:6.2px">400</div>
<div class="box" style="left:304.00px;top:197.8px;width:19.2px;height:7.2px;font-size:5.9px;line-height:6.2px">7. 600</div>
<div class="box" style="left:304.00px;top:206.0px;width:19.2px;height:7.2px;font-size:5.9px;line-height:6.2px">0. 0</div>
<div class="ab" style="left:312.80px;top:217px;width:1.6px;height:53.5px;background:#272b2f"></div>
<div class="ab" style="left:308.80px;top:237.9px;width:9.6px;height:11.7px;background:linear-gradient(#8c9296 0,#7e8488 20%,#686e72 40%,#7a8084 60%,#6c7276);border-right:1.3px solid #2a2e31;border-bottom:1.3px solid #2a2e31"></div>
<div class="ab" style="left:309.40px;top:243px;width:8px;height:1.7px;background:#c6cacb"></div>
<div class="ab" style="left:309.70px;top:276px;width:7.8px;height:7.8px;border-radius:50%;background:linear-gradient(#5a5a5a,#8c8c8c 40%,#7a7a7a 60%,#4e4e4e);border:1.1px solid #3a3a3a"></div>
<div class="t c" style="left:324.50px;width:20px;top:181.6px;font-size:7.4px;color:#15191e">15</div>
<div class="box" style="left:324.90px;top:189.4px;width:19.2px;height:7.2px;font-size:5.9px;line-height:6.2px">500</div>
<div class="box" style="left:324.90px;top:197.8px;width:19.2px;height:7.2px;font-size:5.9px;line-height:6.2px">7. 600</div>
<div class="box" style="left:324.90px;top:206.0px;width:19.2px;height:7.2px;font-size:5.9px;line-height:6.2px">0. 0</div>
<div class="ab" style="left:333.70px;top:217px;width:1.6px;height:53.5px;background:#272b2f"></div>
<div class="ab" style="left:329.70px;top:237.9px;width:9.6px;height:11.7px;background:linear-gradient(#8c9296 0,#7e8488 20%,#686e72 40%,#7a8084 60%,#6c7276);border-right:1.3px solid #2a2e31;border-bottom:1.3px solid #2a2e31"></div>
<div class="ab" style="left:330.30px;top:243px;width:8px;height:1.7px;background:#c6cacb"></div>
<div class="ab" style="left:330.60px;top:276px;width:7.8px;height:7.8px;border-radius:50%;background:linear-gradient(#5a5a5a,#8c8c8c 40%,#7a7a7a 60%,#4e4e4e);border:1.1px solid #3a3a3a"></div>
<div class="t c" style="left:345.40px;width:20px;top:181.6px;font-size:7.4px;color:#15191e">16</div>
<div class="box" style="left:345.80px;top:189.4px;width:19.2px;height:7.2px;font-size:5.9px;line-height:6.2px">630</div>
<div class="box" style="left:345.80px;top:197.8px;width:19.2px;height:7.2px;font-size:5.9px;line-height:6.2px">7. 600</div>
<div class="box" style="left:345.80px;top:206.0px;width:19.2px;height:7.2px;font-size:5.9px;line-height:6.2px">0. 0</div>
<div class="ab" style="left:354.60px;top:217px;width:1.6px;height:53.5px;background:#272b2f"></div>
<div class="ab" style="left:350.60px;top:237.9px;width:9.6px;height:11.7px;background:linear-gradient(#8c9296 0,#7e8488 20%,#686e72 40%,#7a8084 60%,#6c7276);border-right:1.3px solid #2a2e31;border-bottom:1.3px solid #2a2e31"></div>
<div class="ab" style="left:351.20px;top:243px;width:8px;height:1.7px;background:#c6cacb"></div>
<div class="ab" style="left:351.50px;top:276px;width:7.8px;height:7.8px;border-radius:50%;background:linear-gradient(#5a5a5a,#8c8c8c 40%,#7a7a7a 60%,#4e4e4e);border:1.1px solid #3a3a3a"></div>
<div class="t c" style="left:366.30px;width:20px;top:181.6px;font-size:7.4px;color:#15191e">17</div>
<div class="box" style="left:366.70px;top:189.4px;width:19.2px;height:7.2px;font-size:5.9px;line-height:6.2px">800</div>
<div class="box" style="left:366.70px;top:197.8px;width:19.2px;height:7.2px;font-size:5.9px;line-height:6.2px">7. 600</div>
<div class="box" style="left:366.70px;top:206.0px;width:19.2px;height:7.2px;font-size:5.9px;line-height:6.2px">0. 0</div>
<div class="ab" style="left:375.50px;top:217px;width:1.6px;height:53.5px;background:#272b2f"></div>
<div class="ab" style="left:371.50px;top:237.9px;width:9.6px;height:11.7px;background:linear-gradient(#8c9296 0,#7e8488 20%,#686e72 40%,#7a8084 60%,#6c7276);border-right:1.3px solid #2a2e31;border-bottom:1.3px solid #2a2e31"></div>
<div class="ab" style="left:372.10px;top:243px;width:8px;height:1.7px;background:#c6cacb"></div>
<div class="ab" style="left:372.40px;top:276px;width:7.8px;height:7.8px;border-radius:50%;background:linear-gradient(#5a5a5a,#8c8c8c 40%,#7a7a7a 60%,#4e4e4e);border:1.1px solid #3a3a3a"></div>
<div class="t c" style="left:387.20px;width:20px;top:181.6px;font-size:7.4px;color:#15191e">18</div>
<div class="box" style="left:387.60px;top:189.4px;width:19.2px;height:7.2px;font-size:5.9px;line-height:6.2px">1000</div>
<div class="box" style="left:387.60px;top:197.8px;width:19.2px;height:7.2px;font-size:5.9px;line-height:6.2px">7. 600</div>
<div class="box" style="left:387.60px;top:206.0px;width:19.2px;height:7.2px;font-size:5.9px;line-height:6.2px">0. 0</div>
<div class="ab" style="left:396.40px;top:217px;width:1.6px;height:53.5px;background:#272b2f"></div>
<div class="ab" style="left:392.40px;top:237.9px;width:9.6px;height:11.7px;background:linear-gradient(#8c9296 0,#7e8488 20%,#686e72 40%,#7a8084 60%,#6c7276);border-right:1.3px solid #2a2e31;border-bottom:1.3px solid #2a2e31"></div>
<div class="ab" style="left:393.00px;top:243px;width:8px;height:1.7px;background:#c6cacb"></div>
<div class="ab" style="left:393.30px;top:276px;width:7.8px;height:7.8px;border-radius:50%;background:linear-gradient(#5a5a5a,#8c8c8c 40%,#7a7a7a 60%,#4e4e4e);border:1.1px solid #3a3a3a"></div>
<div class="t c" style="left:408.10px;width:20px;top:181.6px;font-size:7.4px;color:#15191e">19</div>
<div class="box" style="left:408.50px;top:189.4px;width:19.2px;height:7.2px;font-size:5.9px;line-height:6.2px">1250</div>
<div class="box" style="left:408.50px;top:197.8px;width:19.2px;height:7.2px;font-size:5.9px;line-height:6.2px">7. 600</div>
<div class="box" style="left:408.50px;top:206.0px;width:19.2px;height:7.2px;font-size:5.9px;line-height:6.2px">0. 0</div>
<div class="ab" style="left:417.30px;top:217px;width:1.6px;height:53.5px;background:#272b2f"></div>
<div class="ab" style="left:413.30px;top:237.9px;width:9.6px;height:11.7px;background:linear-gradient(#8c9296 0,#7e8488 20%,#686e72 40%,#7a8084 60%,#6c7276);border-right:1.3px solid #2a2e31;border-bottom:1.3px solid #2a2e31"></div>
<div class="ab" style="left:413.90px;top:243px;width:8px;height:1.7px;background:#c6cacb"></div>
<div class="ab" style="left:414.20px;top:276px;width:7.8px;height:7.8px;border-radius:50%;background:linear-gradient(#5a5a5a,#8c8c8c 40%,#7a7a7a 60%,#4e4e4e);border:1.1px solid #3a3a3a"></div>
<div class="t c" style="left:429.00px;width:20px;top:181.6px;font-size:7.4px;color:#15191e">20</div>
<div class="box" style="left:429.40px;top:189.4px;width:19.2px;height:7.2px;font-size:5.9px;line-height:6.2px">1600</div>
<div class="box" style="left:429.40px;top:197.8px;width:19.2px;height:7.2px;font-size:5.9px;line-height:6.2px">7. 600</div>
<div class="box" style="left:429.40px;top:206.0px;width:19.2px;height:7.2px;font-size:5.9px;line-height:6.2px">0. 0</div>
<div class="ab" style="left:438.20px;top:217px;width:1.6px;height:53.5px;background:#272b2f"></div>
<div class="ab" style="left:434.20px;top:237.9px;width:9.6px;height:11.7px;background:linear-gradient(#8c9296 0,#7e8488 20%,#686e72 40%,#7a8084 60%,#6c7276);border-right:1.3px solid #2a2e31;border-bottom:1.3px solid #2a2e31"></div>
<div class="ab" style="left:434.80px;top:243px;width:8px;height:1.7px;background:#c6cacb"></div>
<div class="ab" style="left:435.10px;top:276px;width:7.8px;height:7.8px;border-radius:50%;background:linear-gradient(#5a5a5a,#8c8c8c 40%,#7a7a7a 60%,#4e4e4e);border:1.1px solid #3a3a3a"></div>
<div class="t c" style="left:449.90px;width:20px;top:181.6px;font-size:7.4px;color:#15191e">21</div>
<div class="box" style="left:450.30px;top:189.4px;width:19.2px;height:7.2px;font-size:5.9px;line-height:6.2px">2000</div>
<div class="box" style="left:450.30px;top:197.8px;width:19.2px;height:7.2px;font-size:5.9px;line-height:6.2px">7. 600</div>
<div class="box" style="left:450.30px;top:206.0px;width:19.2px;height:7.2px;font-size:5.9px;line-height:6.2px">0. 0</div>
<div class="ab" style="left:459.10px;top:217px;width:1.6px;height:53.5px;background:#272b2f"></div>
<div class="ab" style="left:455.10px;top:237.9px;width:9.6px;height:11.7px;background:linear-gradient(#8c9296 0,#7e8488 20%,#686e72 40%,#7a8084 60%,#6c7276);border-right:1.3px solid #2a2e31;border-bottom:1.3px solid #2a2e31"></div>
<div class="ab" style="left:455.70px;top:243px;width:8px;height:1.7px;background:#c6cacb"></div>
<div class="ab" style="left:456.00px;top:276px;width:7.8px;height:7.8px;border-radius:50%;background:linear-gradient(#5a5a5a,#8c8c8c 40%,#7a7a7a 60%,#4e4e4e);border:1.1px solid #3a3a3a"></div>
<div class="t c" style="left:470.80px;width:20px;top:181.6px;font-size:7.4px;color:#15191e">22</div>
<div class="box" style="left:471.20px;top:189.4px;width:19.2px;height:7.2px;font-size:5.9px;line-height:6.2px">2500</div>
<div class="box" style="left:471.20px;top:197.8px;width:19.2px;height:7.2px;font-size:5.9px;line-height:6.2px">7. 600</div>
<div class="box" style="left:471.20px;top:206.0px;width:19.2px;height:7.2px;font-size:5.9px;line-height:6.2px">0. 0</div>
<div class="ab" style="left:480.00px;top:217px;width:1.6px;height:53.5px;background:#272b2f"></div>
<div class="ab" style="left:476.00px;top:237.9px;width:9.6px;height:11.7px;background:linear-gradient(#8c9296 0,#7e8488 20%,#686e72 40%,#7a8084 60%,#6c7276);border-right:1.3px solid #2a2e31;border-bottom:1.3px solid #2a2e31"></div>
<div class="ab" style="left:476.60px;top:243px;width:8px;height:1.7px;background:#c6cacb"></div>
<div class="ab" style="left:476.90px;top:276px;width:7.8px;height:7.8px;border-radius:50%;background:linear-gradient(#5a5a5a,#8c8c8c 40%,#7a7a7a 60%,#4e4e4e);border:1.1px solid #3a3a3a"></div>
<div class="t c" style="left:491.70px;width:20px;top:181.6px;font-size:7.4px;color:#15191e">23</div>
<div class="box" style="left:492.10px;top:189.4px;width:19.2px;height:7.2px;font-size:5.9px;line-height:6.2px">3150</div>
<div class="box" style="left:492.10px;top:197.8px;width:19.2px;height:7.2px;font-size:5.9px;line-height:6.2px">7. 600</div>
<div class="box" style="left:492.10px;top:206.0px;width:19.2px;height:7.2px;font-size:5.9px;line-height:6.2px">0. 0</div>
<div class="ab" style="left:500.90px;top:217px;width:1.6px;height:53.5px;background:#272b2f"></div>
<div class="ab" style="left:496.90px;top:237.9px;width:9.6px;height:11.7px;background:linear-gradient(#8c9296 0,#7e8488 20%,#686e72 40%,#7a8084 60%,#6c7276);border-right:1.3px solid #2a2e31;border-bottom:1.3px solid #2a2e31"></div>
<div class="ab" style="left:497.50px;top:243px;width:8px;height:1.7px;background:#c6cacb"></div>
<div class="ab" style="left:497.80px;top:276px;width:7.8px;height:7.8px;border-radius:50%;background:linear-gradient(#5a5a5a,#8c8c8c 40%,#7a7a7a 60%,#4e4e4e);border:1.1px solid #3a3a3a"></div>
<div class="t c" style="left:512.60px;width:20px;top:181.6px;font-size:7.4px;color:#15191e">24</div>
<div class="box" style="left:513.00px;top:189.4px;width:19.2px;height:7.2px;font-size:5.9px;line-height:6.2px">4000</div>
<div class="box" style="left:513.00px;top:197.8px;width:19.2px;height:7.2px;font-size:5.9px;line-height:6.2px">7. 600</div>
<div class="box" style="left:513.00px;top:206.0px;width:19.2px;height:7.2px;font-size:5.9px;line-height:6.2px">0. 0</div>
<div class="ab" style="left:521.80px;top:217px;width:1.6px;height:53.5px;background:#272b2f"></div>
<div class="ab" style="left:517.80px;top:237.9px;width:9.6px;height:11.7px;background:linear-gradient(#8c9296 0,#7e8488 20%,#686e72 40%,#7a8084 60%,#6c7276);border-right:1.3px solid #2a2e31;border-bottom:1.3px solid #2a2e31"></div>
<div class="ab" style="left:518.40px;top:243px;width:8px;height:1.7px;background:#c6cacb"></div>
<div class="ab" style="left:518.70px;top:276px;width:7.8px;height:7.8px;border-radius:50%;background:linear-gradient(#5a5a5a,#8c8c8c 40%,#7a7a7a 60%,#4e4e4e);border:1.1px solid #3a3a3a"></div>
<div class="t c" style="left:533.50px;width:20px;top:181.6px;font-size:7.4px;color:#15191e">25</div>
<div class="box" style="left:533.90px;top:189.4px;width:19.2px;height:7.2px;font-size:5.9px;line-height:6.2px">5000</div>
<div class="box" style="left:533.90px;top:197.8px;width:19.2px;height:7.2px;font-size:5.9px;line-height:6.2px">7. 600</div>
<div class="box" style="left:533.90px;top:206.0px;width:19.2px;height:7.2px;font-size:5.9px;line-height:6.2px">0. 0</div>
<div class="ab" style="left:542.70px;top:217px;width:1.6px;height:53.5px;background:#272b2f"></div>
<div class="ab" style="left:538.70px;top:237.9px;width:9.6px;height:11.7px;background:linear-gradient(#8c9296 0,#7e8488 20%,#686e72 40%,#7a8084 60%,#6c7276);border-right:1.3px solid #2a2e31;border-bottom:1.3px solid #2a2e31"></div>
<div class="ab" style="left:539.30px;top:243px;width:8px;height:1.7px;background:#c6cacb"></div>
<div class="ab" style="left:539.60px;top:276px;width:7.8px;height:7.8px;border-radius:50%;background:linear-gradient(#5a5a5a,#8c8c8c 40%,#7a7a7a 60%,#4e4e4e);border:1.1px solid #3a3a3a"></div>
<div class="t c" style="left:554.40px;width:20px;top:181.6px;font-size:7.4px;color:#15191e">26</div>
<div class="box" style="left:554.80px;top:189.4px;width:19.2px;height:7.2px;font-size:5.9px;line-height:6.2px">6300</div>
<div class="box" style="left:554.80px;top:197.8px;width:19.2px;height:7.2px;font-size:5.9px;line-height:6.2px">7. 600</div>
<div class="box" style="left:554.80px;top:206.0px;width:19.2px;height:7.2px;font-size:5.9px;line-height:6.2px">0. 0</div>
<div class="ab" style="left:563.60px;top:217px;width:1.6px;height:53.5px;background:#272b2f"></div>
<div class="ab" style="left:559.60px;top:237.9px;width:9.6px;height:11.7px;background:linear-gradient(#8c9296 0,#7e8488 20%,#686e72 40%,#7a8084 60%,#6c7276);border-right:1.3px solid #2a2e31;border-bottom:1.3px solid #2a2e31"></div>
<div class="ab" style="left:560.20px;top:243px;width:8px;height:1.7px;background:#c6cacb"></div>
<div class="ab" style="left:560.50px;top:276px;width:7.8px;height:7.8px;border-radius:50%;background:linear-gradient(#5a5a5a,#8c8c8c 40%,#7a7a7a 60%,#4e4e4e);border:1.1px solid #3a3a3a"></div>
<div class="t c" style="left:575.30px;width:20px;top:181.6px;font-size:7.4px;color:#15191e">27</div>
<div class="box" style="left:575.70px;top:189.4px;width:19.2px;height:7.2px;font-size:5.9px;line-height:6.2px">8000</div>
<div class="box" style="left:575.70px;top:197.8px;width:19.2px;height:7.2px;font-size:5.9px;line-height:6.2px">7. 600</div>
<div class="box" style="left:575.70px;top:206.0px;width:19.2px;height:7.2px;font-size:5.9px;line-height:6.2px">0. 0</div>
<div class="ab" style="left:584.50px;top:217px;width:1.6px;height:53.5px;background:#272b2f"></div>
<div class="ab" style="left:580.50px;top:237.9px;width:9.6px;height:11.7px;background:linear-gradient(#8c9296 0,#7e8488 20%,#686e72 40%,#7a8084 60%,#6c7276);border-right:1.3px solid #2a2e31;border-bottom:1.3px solid #2a2e31"></div>
<div class="ab" style="left:581.10px;top:243px;width:8px;height:1.7px;background:#c6cacb"></div>
<div class="ab" style="left:581.40px;top:276px;width:7.8px;height:7.8px;border-radius:50%;background:linear-gradient(#5a5a5a,#8c8c8c 40%,#7a7a7a 60%,#4e4e4e);border:1.1px solid #3a3a3a"></div>
<div class="t c" style="left:596.20px;width:20px;top:181.6px;font-size:7.4px;color:#15191e">28</div>
<div class="box" style="left:596.60px;top:189.4px;width:19.2px;height:7.2px;font-size:5.9px;line-height:6.2px">10000</div>
<div class="box" style="left:596.60px;top:197.8px;width:19.2px;height:7.2px;font-size:5.9px;line-height:6.2px">7. 600</div>
<div class="box" style="left:596.60px;top:206.0px;width:19.2px;height:7.2px;font-size:5.9px;line-height:6.2px">0. 0</div>
<div class="ab" style="left:605.40px;top:217px;width:1.6px;height:53.5px;background:#272b2f"></div>
<div class="ab" style="left:601.40px;top:237.9px;width:9.6px;height:11.7px;background:linear-gradient(#8c9296 0,#7e8488 20%,#686e72 40%,#7a8084 60%,#6c7276);border-right:1.3px solid #2a2e31;border-bottom:1.3px solid #2a2e31"></div>
<div class="ab" style="left:602.00px;top:243px;width:8px;height:1.7px;background:#c6cacb"></div>
<div class="ab" style="left:602.30px;top:276px;width:7.8px;height:7.8px;border-radius:50%;background:linear-gradient(#5a5a5a,#8c8c8c 40%,#7a7a7a 60%,#4e4e4e);border:1.1px solid #3a3a3a"></div>
<div class="t c" style="left:617.10px;width:20px;top:181.6px;font-size:7.4px;color:#15191e">29</div>
<div class="box" style="left:617.50px;top:189.4px;width:19.2px;height:7.2px;font-size:5.9px;line-height:6.2px">12500</div>
<div class="box" style="left:617.50px;top:197.8px;width:19.2px;height:7.2px;font-size:5.9px;line-height:6.2px">7. 600</div>
<div class="box" style="left:617.50px;top:206.0px;width:19.2px;height:7.2px;font-size:5.9px;line-height:6.2px">0. 0</div>
<div class="ab" style="left:626.30px;top:217px;width:1.6px;height:53.5px;background:#272b2f"></div>
<div class="ab" style="left:622.30px;top:237.9px;width:9.6px;height:11.7px;background:linear-gradient(#8c9296 0,#7e8488 20%,#686e72 40%,#7a8084 60%,#6c7276);border-right:1.3px solid #2a2e31;border-bottom:1.3px solid #2a2e31"></div>
<div class="ab" style="left:622.90px;top:243px;width:8px;height:1.7px;background:#c6cacb"></div>
<div class="ab" style="left:623.20px;top:276px;width:7.8px;height:7.8px;border-radius:50%;background:linear-gradient(#5a5a5a,#8c8c8c 40%,#7a7a7a 60%,#4e4e4e);border:1.1px solid #3a3a3a"></div>
<div class="t c" style="left:638.00px;width:20px;top:181.6px;font-size:7.4px;color:#15191e">30</div>
<div class="box" style="left:638.40px;top:189.4px;width:19.2px;height:7.2px;font-size:5.9px;line-height:6.2px">16000</div>
<div class="box" style="left:638.40px;top:197.8px;width:19.2px;height:7.2px;font-size:5.9px;line-height:6.2px">7. 600</div>
<div class="box" style="left:638.40px;top:206.0px;width:19.2px;height:7.2px;font-size:5.9px;line-height:6.2px">0. 0</div>
<div class="ab" style="left:647.20px;top:217px;width:1.6px;height:53.5px;background:#272b2f"></div>
<div class="ab" style="left:643.20px;top:237.9px;width:9.6px;height:11.7px;background:linear-gradient(#8c9296 0,#7e8488 20%,#686e72 40%,#7a8084 60%,#6c7276);border-right:1.3px solid #2a2e31;border-bottom:1.3px solid #2a2e31"></div>
<div class="ab" style="left:643.80px;top:243px;width:8px;height:1.7px;background:#c6cacb"></div>
<div class="ab" style="left:644.10px;top:276px;width:7.8px;height:7.8px;border-radius:50%;background:linear-gradient(#5a5a5a,#8c8c8c 40%,#7a7a7a 60%,#4e4e4e);border:1.1px solid #3a3a3a"></div>
<div class="t c" style="left:658.90px;width:20px;top:181.6px;font-size:7.4px;color:#15191e">31</div>
<div class="box" style="left:659.30px;top:189.4px;width:19.2px;height:7.2px;font-size:5.9px;line-height:6.2px">20000</div>
<div class="box" style="left:659.30px;top:197.8px;width:19.2px;height:7.2px;font-size:5.9px;line-height:6.2px">7. 600</div>
<div class="box" style="left:659.30px;top:206.0px;width:19.2px;height:7.2px;font-size:5.9px;line-height:6.2px">0. 0</div>
<div class="ab" style="left:668.10px;top:217px;width:1.6px;height:53.5px;background:#272b2f"></div>
<div class="ab" style="left:664.10px;top:237.9px;width:9.6px;height:11.7px;background:linear-gradient(#8c9296 0,#7e8488 20%,#686e72 40%,#7a8084 60%,#6c7276);border-right:1.3px solid #2a2e31;border-bottom:1.3px solid #2a2e31"></div>
<div class="ab" style="left:664.70px;top:243px;width:8px;height:1.7px;background:#c6cacb"></div>
<div class="ab" style="left:665.00px;top:276px;width:7.8px;height:7.8px;border-radius:50%;background:linear-gradient(#5a5a5a,#8c8c8c 40%,#7a7a7a 60%,#4e4e4e);border:1.1px solid #3a3a3a"></div>
<div class="ab" style="left:11.00px;top:298.3px;width:46.4px;height:12.3px;background:linear-gradient(#60ae40,#509c34);border-radius:2px;box-shadow:0 0 0 1px #42782e inset, 0 1px 1px rgba(0,0,0,.3)"></div>
<div class="t" style="left:25.3px;top:300.2px;font-size:9.9px;transform:scaleX(.86);transform-origin:0 0;color:#e6381a">CH1</div>
<div class="ab" style="left:10.50px;top:317px;width:47.2px;height:11.7px;background:linear-gradient(#3f8b8d,#388184);border:1px solid #32504f"></div>
<div class="t" style="left:11.00px;top:319.6px;font-size:7px;transform:scaleX(1.08);transform-origin:0 0;-webkit-text-stroke:.2px #000;color:#000">前置左全频</div>
<svg class="ab" style="left:52.10px;top:321.3px" width="5" height="4" viewBox="0 0 5 4"><path d="M0.2 .2 L4.4 .2 L2.3 3.6Z" fill="#7e6c6e"/></svg>
<svg class="ab" style="left:27.10px;top:345px" width="8" height="54" viewBox="0 0 8 54"><defs><linearGradient id="rg0" x1="0" x2="1"><stop offset="0" stop-color="#8a9094"/><stop offset=".8" stop-color="#c6ccd0"/><stop offset="1" stop-color="#7a8286"/></linearGradient></defs><path d="M0 0 L6.4 0 L4.4 53 L0 53Z" fill="url(#rg0)"/><rect x="0.1" y="0" width="2.3" height="52.5" fill="#22160c"/></svg>
<div class="ab" style="left:21.90px;top:342.20px;width:4.6px;height:0.85px;background:#434a4f"></div>
<div class="ab" style="left:23.90px;top:345.86px;width:2.6px;height:0.85px;background:#434a4f"></div>
<div class="ab" style="left:23.90px;top:349.52px;width:2.6px;height:0.85px;background:#434a4f"></div>
<div class="ab" style="left:23.90px;top:353.18px;width:2.6px;height:0.85px;background:#434a4f"></div>
<div class="ab" style="left:23.90px;top:356.84px;width:2.6px;height:0.85px;background:#434a4f"></div>
<div class="ab" style="left:21.90px;top:360.50px;width:4.6px;height:0.85px;background:#434a4f"></div>
<div class="ab" style="left:23.90px;top:364.16px;width:2.6px;height:0.85px;background:#434a4f"></div>
<div class="ab" style="left:23.90px;top:367.82px;width:2.6px;height:0.85px;background:#434a4f"></div>
<div class="ab" style="left:23.90px;top:371.48px;width:2.6px;height:0.85px;background:#434a4f"></div>
<div class="ab" style="left:23.90px;top:375.14px;width:2.6px;height:0.85px;background:#434a4f"></div>
<div class="ab" style="left:21.90px;top:378.80px;width:4.6px;height:0.85px;background:#434a4f"></div>
<div class="ab" style="left:23.90px;top:382.46px;width:2.6px;height:0.85px;background:#434a4f"></div>
<div class="ab" style="left:23.90px;top:386.12px;width:2.6px;height:0.85px;background:#434a4f"></div>
<div class="ab" style="left:23.90px;top:389.78px;width:2.6px;height:0.85px;background:#434a4f"></div>
<div class="ab" style="left:23.90px;top:393.44px;width:2.6px;height:0.85px;background:#434a4f"></div>
<div class="ab" style="left:21.90px;top:397.10px;width:4.6px;height:0.85px;background:#434a4f"></div>
<div class="t" style="left:-4.50px;width:25.70px;text-align:right;top:340.50px;font-size:6.6px;font-weight:bold;color:#0e1114">0</div>
<div class="t" style="left:-4.50px;width:26.10px;text-align:right;top:358.90px;font-size:6.6px;font-weight:bold;color:#0e1114">-20</div>
<div class="t" style="left:-4.50px;width:26.10px;text-align:right;top:377.10px;font-size:6.6px;font-weight:bold;color:#0e1114">-40</div>
<div class="t" style="left:-4.50px;width:25.70px;text-align:right;top:395.40px;font-size:6.6px;font-weight:bold;color:#0e1114">OFF</div>
<div class="ab" style="left:23.60px;top:335.9px;width:9.6px;height:12.9px;background:linear-gradient(#a6acb0,#8e9498 45%,#6c7276);border-right:1.2px solid #30353a;border-bottom:1px solid #30353a;border-radius:1px"></div>
<div class="ab" style="left:24.00px;top:341.8px;width:8px;height:1.6px;background:#e6eaeb"></div>
<div class="t k" style="left:38.80px;top:342.6px;font-size:8.1px;color:#15191e">正相</div>
<svg class="ab" style="left:41.00px;top:365px" width="14" height="12" viewBox="0 0 14 12"><path d="M1 3.6 L3.4 3.6 L6.4 1 L6.4 11 L3.4 8.4 L1 8.4Z" fill="#22b822"/><path d="M8 3.6 Q9.6 6 8 8.4 M10 1.6 Q12.8 6 10 10.4" fill="none" stroke="#22b822" stroke-width="1.3"/></svg>
<div class="box" style="left:35.80px;top:388px;width:23.6px;height:11.5px;font-size:6.6px;line-height:9.6px;border-color:#8a9088;color:#44443a">0. 0dB</div>
<div class="t k" style="left:12.20px;top:408.6px;font-size:8.9px;color:#15191e">延时:</div>
<div class="box" style="left:35.80px;top:407.6px;width:23.6px;height:12px;font-size:6.6px;line-height:10px;border-color:#8a9088;color:#44443a">0. 000</div>
<div class="btn" style="left:66.68px;top:298.5px;width:46.5px;height:12px;line-height:12.2px;font-size:9.4px;letter-spacing:-.2px">CH2</div>
<div class="ab" style="left:66.48px;top:317px;width:47.2px;height:11.7px;background:linear-gradient(#3f8b8d,#388184);border:1px solid #32504f"></div>
<div class="t" style="left:66.98px;top:319.6px;font-size:7px;transform:scaleX(1.08);transform-origin:0 0;-webkit-text-stroke:.2px #000;color:#000">前置左全频</div>
<svg class="ab" style="left:108.08px;top:321.3px" width="5" height="4" viewBox="0 0 5 4"><path d="M0.2 .2 L4.4 .2 L2.3 3.6Z" fill="#7e6c6e"/></svg>
<svg class="ab" style="left:83.16px;top:345px" width="8" height="54" viewBox="0 0 8 54"><defs><linearGradient id="rg1" x1="0" x2="1"><stop offset="0" stop-color="#8a9094"/><stop offset=".8" stop-color="#c6ccd0"/><stop offset="1" stop-color="#7a8286"/></linearGradient></defs><path d="M0 0 L6.4 0 L4.4 53 L0 53Z" fill="url(#rg1)"/><rect x="0.1" y="0" width="2.3" height="52.5" fill="#22160c"/></svg>
<div class="ab" style="left:77.96px;top:342.20px;width:4.6px;height:0.85px;background:#434a4f"></div>
<div class="ab" style="left:79.96px;top:345.86px;width:2.6px;height:0.85px;background:#434a4f"></div>
<div class="ab" style="left:79.96px;top:349.52px;width:2.6px;height:0.85px;background:#434a4f"></div>
<div class="ab" style="left:79.96px;top:353.18px;width:2.6px;height:0.85px;background:#434a4f"></div>
<div class="ab" style="left:79.96px;top:356.84px;width:2.6px;height:0.85px;background:#434a4f"></div>
<div class="ab" style="left:77.96px;top:360.50px;width:4.6px;height:0.85px;background:#434a4f"></div>
<div class="ab" style="left:79.96px;top:364.16px;width:2.6px;height:0.85px;background:#434a4f"></div>
<div class="ab" style="left:79.96px;top:367.82px;width:2.6px;height:0.85px;background:#434a4f"></div>
<div class="ab" style="left:79.96px;top:371.48px;width:2.6px;height:0.85px;background:#434a4f"></div>
<div class="ab" style="left:79.96px;top:375.14px;width:2.6px;height:0.85px;background:#434a4f"></div>
<div class="ab" style="left:77.96px;top:378.80px;width:4.6px;height:0.85px;background:#434a4f"></div>
<div class="ab" style="left:79.96px;top:382.46px;width:2.6px;height:0.85px;background:#434a4f"></div>
<div class="ab" style="left:79.96px;top:386.12px;width:2.6px;height:0.85px;background:#434a4f"></div>
<div class="ab" style="left:79.96px;top:389.78px;width:2.6px;height:0.85px;background:#434a4f"></div>
<div class="ab" style="left:79.96px;top:393.44px;width:2.6px;height:0.85px;background:#434a4f"></div>
<div class="ab" style="left:77.96px;top:397.10px;width:4.6px;height:0.85px;background:#434a4f"></div>
<div class="t" style="left:51.56px;width:25.70px;text-align:right;top:340.50px;font-size:6.6px;font-weight:bold;color:#0e1114">0</div>
<div class="t" style="left:51.56px;width:26.10px;text-align:right;top:358.90px;font-size:6.6px;font-weight:bold;color:#0e1114">-20</div>
<div class="t" style="left:51.56px;width:26.10px;text-align:right;top:377.10px;font-size:6.6px;font-weight:bold;color:#0e1114">-40</div>
<div class="t" style="left:51.56px;width:25.70px;text-align:right;top:395.40px;font-size:6.6px;font-weight:bold;color:#0e1114">OFF</div>
<div class="ab" style="left:79.66px;top:335.9px;width:9.6px;height:12.9px;background:linear-gradient(#a6acb0,#8e9498 45%,#6c7276);border-right:1.2px solid #30353a;border-bottom:1px solid #30353a;border-radius:1px"></div>
<div class="ab" style="left:80.06px;top:341.8px;width:8px;height:1.6px;background:#e6eaeb"></div>
<div class="t k" style="left:94.86px;top:342.6px;font-size:8.1px;color:#15191e">正相</div>
<svg class="ab" style="left:97.06px;top:365px" width="14" height="12" viewBox="0 0 14 12"><path d="M1 3.6 L3.4 3.6 L6.4 1 L6.4 11 L3.4 8.4 L1 8.4Z" fill="#22b822"/><path d="M8 3.6 Q9.6 6 8 8.4 M10 1.6 Q12.8 6 10 10.4" fill="none" stroke="#22b822" stroke-width="1.3"/></svg>
<div class="box" style="left:91.86px;top:388px;width:23.6px;height:11.5px;font-size:6.6px;line-height:9.6px;border-color:#8a9088;color:#44443a">0. 0dB</div>
<div class="t k" style="left:68.26px;top:408.6px;font-size:8.9px;color:#15191e">延时:</div>
<div class="box" style="left:91.86px;top:407.6px;width:23.6px;height:12px;font-size:6.6px;line-height:10px;border-color:#8a9088;color:#44443a">0. 000</div>
<div class="btn" style="left:122.66px;top:298.5px;width:46.5px;height:12px;line-height:12.2px;font-size:9.4px;letter-spacing:-.2px">CH3</div>
<div class="ab" style="left:122.46px;top:317px;width:47.2px;height:11.7px;background:linear-gradient(#3f8b8d,#388184);border:1px solid #32504f"></div>
<div class="t" style="left:122.96px;top:319.6px;font-size:7px;transform:scaleX(1.08);transform-origin:0 0;-webkit-text-stroke:.2px #000;color:#000">前置左全频</div>
<svg class="ab" style="left:164.06px;top:321.3px" width="5" height="4" viewBox="0 0 5 4"><path d="M0.2 .2 L4.4 .2 L2.3 3.6Z" fill="#7e6c6e"/></svg>
<svg class="ab" style="left:139.22px;top:345px" width="8" height="54" viewBox="0 0 8 54"><defs><linearGradient id="rg2" x1="0" x2="1"><stop offset="0" stop-color="#8a9094"/><stop offset=".8" stop-color="#c6ccd0"/><stop offset="1" stop-color="#7a8286"/></linearGradient></defs><path d="M0 0 L6.4 0 L4.4 53 L0 53Z" fill="url(#rg2)"/><rect x="0.1" y="0" width="2.3" height="52.5" fill="#22160c"/></svg>
<div class="ab" style="left:134.02px;top:342.20px;width:4.6px;height:0.85px;background:#434a4f"></div>
<div class="ab" style="left:136.02px;top:345.86px;width:2.6px;height:0.85px;background:#434a4f"></div>
<div class="ab" style="left:136.02px;top:349.52px;width:2.6px;height:0.85px;background:#434a4f"></div>
<div class="ab" style="left:136.02px;top:353.18px;width:2.6px;height:0.85px;background:#434a4f"></div>
<div class="ab" style="left:136.02px;top:356.84px;width:2.6px;height:0.85px;background:#434a4f"></div>
<div class="ab" style="left:134.02px;top:360.50px;width:4.6px;height:0.85px;background:#434a4f"></div>
<div class="ab" style="left:136.02px;top:364.16px;width:2.6px;height:0.85px;background:#434a4f"></div>
<div class="ab" style="left:136.02px;top:367.82px;width:2.6px;height:0.85px;background:#434a4f"></div>
<div class="ab" style="left:136.02px;top:371.48px;width:2.6px;height:0.85px;background:#434a4f"></div>
<div class="ab" style="left:136.02px;top:375.14px;width:2.6px;height:0.85px;background:#434a4f"></div>
<div class="ab" style="left:134.02px;top:378.80px;width:4.6px;height:0.85px;background:#434a4f"></div>
<div class="ab" style="left:136.02px;top:382.46px;width:2.6px;height:0.85px;background:#434a4f"></div>
<div class="ab" style="left:136.02px;top:386.12px;width:2.6px;height:0.85px;background:#434a4f"></div>
<div class="ab" style="left:136.02px;top:389.78px;width:2.6px;height:0.85px;background:#434a4f"></div>
<div class="ab" style="left:136.02px;top:393.44px;width:2.6px;height:0.85px;background:#434a4f"></div>
<div class="ab" style="left:134.02px;top:397.10px;width:4.6px;height:0.85px;background:#434a4f"></div>
<div class="t" style="left:107.62px;width:25.70px;text-align:right;top:340.50px;font-size:6.6px;font-weight:bold;color:#0e1114">0</div>
<div class="t" style="left:107.62px;width:26.10px;text-align:right;top:358.90px;font-size:6.6px;font-weight:bold;color:#0e1114">-20</div>
<div class="t" style="left:107.62px;width:26.10px;text-align:right;top:377.10px;font-size:6.6px;font-weight:bold;color:#0e1114">-40</div>
<div class="t" style="left:107.62px;width:25.70px;text-align:right;top:395.40px;font-size:6.6px;font-weight:bold;color:#0e1114">OFF</div>
<div class="ab" style="left:135.72px;top:335.9px;width:9.6px;height:12.9px;background:linear-gradient(#a6acb0,#8e9498 45%,#6c7276);border-right:1.2px solid #30353a;border-bottom:1px solid #30353a;border-radius:1px"></div>
<div class="ab" style="left:136.12px;top:341.8px;width:8px;height:1.6px;background:#e6eaeb"></div>
<div class="t k" style="left:150.92px;top:342.6px;font-size:8.1px;color:#15191e">正相</div>
<svg class="ab" style="left:153.12px;top:365px" width="14" height="12" viewBox="0 0 14 12"><path d="M1 3.6 L3.4 3.6 L6.4 1 L6.4 11 L3.4 8.4 L1 8.4Z" fill="#22b822"/><path d="M8 3.6 Q9.6 6 8 8.4 M10 1.6 Q12.8 6 10 10.4" fill="none" stroke="#22b822" stroke-width="1.3"/></svg>
<div class="box" style="left:147.92px;top:388px;width:23.6px;height:11.5px;font-size:6.6px;line-height:9.6px;border-color:#8a9088;color:#44443a">0. 0dB</div>
<div class="t k" style="left:124.32px;top:408.6px;font-size:8.9px;color:#15191e">延时:</div>
<div class="box" style="left:147.92px;top:407.6px;width:23.6px;height:12px;font-size:6.6px;line-height:10px;border-color:#8a9088;color:#44443a">0. 000</div>
<div class="btn" style="left:178.64px;top:298.5px;width:46.5px;height:12px;line-height:12.2px;font-size:9.4px;letter-spacing:-.2px">CH4</div>
<div class="ab" style="left:178.44px;top:317px;width:47.2px;height:11.7px;background:linear-gradient(#3f8b8d,#388184);border:1px solid #32504f"></div>
<div class="t" style="left:178.94px;top:319.6px;font-size:7px;transform:scaleX(1.08);transform-origin:0 0;-webkit-text-stroke:.2px #000;color:#000">前置左全频</div>
<svg class="ab" style="left:220.04px;top:321.3px" width="5" height="4" viewBox="0 0 5 4"><path d="M0.2 .2 L4.4 .2 L2.3 3.6Z" fill="#7e6c6e"/></svg>
<svg class="ab" style="left:195.28px;top:345px" width="8" height="54" viewBox="0 0 8 54"><defs><linearGradient id="rg3" x1="0" x2="1"><stop offset="0" stop-color="#8a9094"/><stop offset=".8" stop-color="#c6ccd0"/><stop offset="1" stop-color="#7a8286"/></linearGradient></defs><path d="M0 0 L6.4 0 L4.4 53 L0 53Z" fill="url(#rg3)"/><rect x="0.1" y="0" width="2.3" height="52.5" fill="#22160c"/></svg>
<div class="ab" style="left:190.08px;top:342.20px;width:4.6px;height:0.85px;background:#434a4f"></div>
<div class="ab" style="left:192.08px;top:345.86px;width:2.6px;height:0.85px;background:#434a4f"></div>
<div class="ab" style="left:192.08px;top:349.52px;width:2.6px;height:0.85px;background:#434a4f"></div>
<div class="ab" style="left:192.08px;top:353.18px;width:2.6px;height:0.85px;background:#434a4f"></div>
<div class="ab" style="left:192.08px;top:356.84px;width:2.6px;height:0.85px;background:#434a4f"></div>
<div class="ab" style="left:190.08px;top:360.50px;width:4.6px;height:0.85px;background:#434a4f"></div>
<div class="ab" style="left:192.08px;top:364.16px;width:2.6px;height:0.85px;background:#434a4f"></div>
<div class="ab" style="left:192.08px;top:367.82px;width:2.6px;height:0.85px;background:#434a4f"></div>
<div class="ab" style="left:192.08px;top:371.48px;width:2.6px;height:0.85px;background:#434a4f"></div>
<div class="ab" style="left:192.08px;top:375.14px;width:2.6px;height:0.85px;background:#434a4f"></div>
<div class="ab" style="left:190.08px;top:378.80px;width:4.6px;height:0.85px;background:#434a4f"></div>
<div class="ab" style="left:192.08px;top:382.46px;width:2.6px;height:0.85px;background:#434a4f"></div>
<div class="ab" style="left:192.08px;top:386.12px;width:2.6px;height:0.85px;background:#434a4f"></div>
<div class="ab" style="left:192.08px;top:389.78px;width:2.6px;height:0.85px;background:#434a4f"></div>
<div class="ab" style="left:192.08px;top:393.44px;width:2.6px;height:0.85px;background:#434a4f"></div>
<div class="ab" style="left:190.08px;top:397.10px;width:4.6px;height:0.85px;background:#434a4f"></div>
<div class="t" style="left:163.68px;width:25.70px;text-align:right;top:340.50px;font-size:6.6px;font-weight:bold;color:#0e1114">0</div>
<div class="t" style="left:163.68px;width:26.10px;text-align:right;top:358.90px;font-size:6.6px;font-weight:bold;color:#0e1114">-20</div>
<div class="t" style="left:163.68px;width:26.10px;text-align:right;top:377.10px;font-size:6.6px;font-weight:bold;color:#0e1114">-40</div>
<div class="t" style="left:163.68px;width:25.70px;text-align:right;top:395.40px;font-size:6.6px;font-weight:bold;color:#0e1114">OFF</div>
<div class="ab" style="left:191.78px;top:335.9px;width:9.6px;height:12.9px;background:linear-gradient(#a6acb0,#8e9498 45%,#6c7276);border-right:1.2px solid #30353a;border-bottom:1px solid #30353a;border-radius:1px"></div>
<div class="ab" style="left:192.18px;top:341.8px;width:8px;height:1.6px;background:#e6eaeb"></div>
<div class="t k" style="left:206.98px;top:342.6px;font-size:8.1px;color:#15191e">正相</div>
<svg class="ab" style="left:209.18px;top:365px" width="14" height="12" viewBox="0 0 14 12"><path d="M1 3.6 L3.4 3.6 L6.4 1 L6.4 11 L3.4 8.4 L1 8.4Z" fill="#22b822"/><path d="M8 3.6 Q9.6 6 8 8.4 M10 1.6 Q12.8 6 10 10.4" fill="none" stroke="#22b822" stroke-width="1.3"/></svg>
<div class="box" style="left:203.98px;top:388px;width:23.6px;height:11.5px;font-size:6.6px;line-height:9.6px;border-color:#8a9088;color:#44443a">0. 0dB</div>
<div class="t k" style="left:180.38px;top:408.6px;font-size:8.9px;color:#15191e">延时:</div>
<div class="box" style="left:203.98px;top:407.6px;width:23.6px;height:12px;font-size:6.6px;line-height:10px;border-color:#8a9088;color:#44443a">0. 000</div>
<div class="btn" style="left:234.62px;top:298.5px;width:46.5px;height:12px;line-height:12.2px;font-size:9.4px;letter-spacing:-.2px">CH5</div>
<div class="ab" style="left:234.42px;top:317px;width:47.2px;height:11.7px;background:linear-gradient(#3f8b8d,#388184);border:1px solid #32504f"></div>
<div class="t" style="left:234.92px;top:319.6px;font-size:7px;transform:scaleX(1.08);transform-origin:0 0;-webkit-text-stroke:.2px #000;color:#000">前置左全频</div>
<svg class="ab" style="left:276.02px;top:321.3px" width="5" height="4" viewBox="0 0 5 4"><path d="M0.2 .2 L4.4 .2 L2.3 3.6Z" fill="#7e6c6e"/></svg>
<svg class="ab" style="left:251.34px;top:345px" width="8" height="54" viewBox="0 0 8 54"><defs><linearGradient id="rg4" x1="0" x2="1"><stop offset="0" stop-color="#8a9094"/><stop offset=".8" stop-color="#c6ccd0"/><stop offset="1" stop-color="#7a8286"/></linearGradient></defs><path d="M0 0 L6.4 0 L4.4 53 L0 53Z" fill="url(#rg4)"/><rect x="0.1" y="0" width="2.3" height="52.5" fill="#22160c"/></svg>
<div class="ab" style="left:246.14px;top:342.20px;width:4.6px;height:0.85px;background:#434a4f"></div>
<div class="ab" style="left:248.14px;top:345.86px;width:2.6px;height:0.85px;background:#434a4f"></div>
<div class="ab" style="left:248.14px;top:349.52px;width:2.6px;height:0.85px;background:#434a4f"></div>
<div class="ab" style="left:248.14px;top:353.18px;width:2.6px;height:0.85px;background:#434a4f"></div>
<div class="ab" style="left:248.14px;top:356.84px;width:2.6px;height:0.85px;background:#434a4f"></div>
<div class="ab" style="left:246.14px;top:360.50px;width:4.6px;height:0.85px;background:#434a4f"></div>
<div class="ab" style="left:248.14px;top:364.16px;width:2.6px;height:0.85px;background:#434a4f"></div>
<div class="ab" style="left:248.14px;top:367.82px;width:2.6px;height:0.85px;background:#434a4f"></div>
<div class="ab" style="left:248.14px;top:371.48px;width:2.6px;height:0.85px;background:#434a4f"></div>
<div class="ab" style="left:248.14px;top:375.14px;width:2.6px;height:0.85px;background:#434a4f"></div>
<div class="ab" style="left:246.14px;top:378.80px;width:4.6px;height:0.85px;background:#434a4f"></div>
<div class="ab" style="left:248.14px;top:382.46px;width:2.6px;height:0.85px;background:#434a4f"></div>
<div class="ab" style="left:248.14px;top:386.12px;width:2.6px;height:0.85px;background:#434a4f"></div>
<div class="ab" style="left:248.14px;top:389.78px;width:2.6px;height:0.85px;background:#434a4f"></div>
<div class="ab" style="left:248.14px;top:393.44px;width:2.6px;height:0.85px;background:#434a4f"></div>
<div class="ab" style="left:246.14px;top:397.10px;width:4.6px;height:0.85px;background:#434a4f"></div>
<div class="t" style="left:219.74px;width:25.70px;text-align:right;top:340.50px;font-size:6.6px;font-weight:bold;color:#0e1114">0</div>
<div class="t" style="left:219.74px;width:26.10px;text-align:right;top:358.90px;font-size:6.6px;font-weight:bold;color:#0e1114">-20</div>
<div class="t" style="left:219.74px;width:26.10px;text-align:right;top:377.10px;font-size:6.6px;font-weight:bold;color:#0e1114">-40</div>
<div class="t" style="left:219.74px;width:25.70px;text-align:right;top:395.40px;font-size:6.6px;font-weight:bold;color:#0e1114">OFF</div>
<div class="ab" style="left:247.84px;top:335.9px;width:9.6px;height:12.9px;background:linear-gradient(#a6acb0,#8e9498 45%,#6c7276);border-right:1.2px solid #30353a;border-bottom:1px solid #30353a;border-radius:1px"></div>
<div class="ab" style="left:248.24px;top:341.8px;width:8px;height:1.6px;background:#e6eaeb"></div>
<div class="t k" style="left:263.04px;top:342.6px;font-size:8.1px;color:#15191e">正相</div>
<svg class="ab" style="left:265.24px;top:365px" width="14" height="12" viewBox="0 0 14 12"><path d="M1 3.6 L3.4 3.6 L6.4 1 L6.4 11 L3.4 8.4 L1 8.4Z" fill="#22b822"/><path d="M8 3.6 Q9.6 6 8 8.4 M10 1.6 Q12.8 6 10 10.4" fill="none" stroke="#22b822" stroke-width="1.3"/></svg>
<div class="box" style="left:260.04px;top:388px;width:23.6px;height:11.5px;font-size:6.6px;line-height:9.6px;border-color:#8a9088;color:#44443a">0. 0dB</div>
<div class="t k" style="left:236.44px;top:408.6px;font-size:8.9px;color:#15191e">延时:</div>
<div class="box" style="left:260.04px;top:407.6px;width:23.6px;height:12px;font-size:6.6px;line-height:10px;border-color:#8a9088;color:#44443a">0. 000</div>
<div class="btn" style="left:290.60px;top:298.5px;width:46.5px;height:12px;line-height:12.2px;font-size:9.4px;letter-spacing:-.2px">CH6</div>
<div class="ab" style="left:290.40px;top:317px;width:47.2px;height:11.7px;background:linear-gradient(#3f8b8d,#388184);border:1px solid #32504f"></div>
<div class="t" style="left:290.90px;top:319.6px;font-size:7px;transform:scaleX(1.08);transform-origin:0 0;-webkit-text-stroke:.2px #000;color:#000">前置左全频</div>
<svg class="ab" style="left:332.00px;top:321.3px" width="5" height="4" viewBox="0 0 5 4"><path d="M0.2 .2 L4.4 .2 L2.3 3.6Z" fill="#7e6c6e"/></svg>
<svg class="ab" style="left:307.40px;top:345px" width="8" height="54" viewBox="0 0 8 54"><defs><linearGradient id="rg5" x1="0" x2="1"><stop offset="0" stop-color="#8a9094"/><stop offset=".8" stop-color="#c6ccd0"/><stop offset="1" stop-color="#7a8286"/></linearGradient></defs><path d="M0 0 L6.4 0 L4.4 53 L0 53Z" fill="url(#rg5)"/><rect x="0.1" y="0" width="2.3" height="52.5" fill="#22160c"/></svg>
<div class="ab" style="left:302.20px;top:342.20px;width:4.6px;height:0.85px;background:#434a4f"></div>
<div class="ab" style="left:304.20px;top:345.86px;width:2.6px;height:0.85px;background:#434a4f"></div>
<div class="ab" style="left:304.20px;top:349.52px;width:2.6px;height:0.85px;background:#434a4f"></div>
<div class="ab" style="left:304.20px;top:353.18px;width:2.6px;height:0.85px;background:#434a4f"></div>
<div class="ab" style="left:304.20px;top:356.84px;width:2.6px;height:0.85px;background:#434a4f"></div>
<div class="ab" style="left:302.20px;top:360.50px;width:4.6px;height:0.85px;background:#434a4f"></div>
<div class="ab" style="left:304.20px;top:364.16px;width:2.6px;height:0.85px;background:#434a4f"></div>
<div class="ab" style="left:304.20px;top:367.82px;width:2.6px;height:0.85px;background:#434a4f"></div>
<div class="ab" style="left:304.20px;top:371.48px;width:2.6px;height:0.85px;background:#434a4f"></div>
<div class="ab" style="left:304.20px;top:375.14px;width:2.6px;height:0.85px;background:#434a4f"></div>
<div class="ab" style="left:302.20px;top:378.80px;width:4.6px;height:0.85px;background:#434a4f"></div>
<div class="ab" style="left:304.20px;top:382.46px;width:2.6px;height:0.85px;background:#434a4f"></div>
<div class="ab" style="left:304.20px;top:386.12px;width:2.6px;height:0.85px;background:#434a4f"></div>
<div class="ab" style="left:304.20px;top:389.78px;width:2.6px;height:0.85px;background:#434a4f"></div>
<div class="ab" style="left:304.20px;top:393.44px;width:2.6px;height:0.85px;background:#434a4f"></div>
<div class="ab" style="left:302.20px;top:397.10px;width:4.6px;height:0.85px;background:#434a4f"></div>
<div class="t" style="left:275.80px;width:25.70px;text-align:right;top:340.50px;font-size:6.6px;font-weight:bold;color:#0e1114">0</div>
<div class="t" style="left:275.80px;width:26.10px;text-align:right;top:358.90px;font-size:6.6px;font-weight:bold;color:#0e1114">-20</div>
<div class="t" style="left:275.80px;width:26.10px;text-align:right;top:377.10px;font-size:6.6px;font-weight:bold;color:#0e1114">-40</div>
<div class="t" style="left:275.80px;width:25.70px;text-align:right;top:395.40px;font-size:6.6px;font-weight:bold;color:#0e1114">OFF</div>
<div class="ab" style="left:303.90px;top:335.9px;width:9.6px;height:12.9px;background:linear-gradient(#a6acb0,#8e9498 45%,#6c7276);border-right:1.2px solid #30353a;border-bottom:1px solid #30353a;border-radius:1px"></div>
<div class="ab" style="left:304.30px;top:341.8px;width:8px;height:1.6px;background:#e6eaeb"></div>
<div class="t k" style="left:319.10px;top:342.6px;font-size:8.1px;color:#15191e">正相</div>
<svg class="ab" style="left:321.30px;top:365px" width="14" height="12" viewBox="0 0 14 12"><path d="M1 3.6 L3.4 3.6 L6.4 1 L6.4 11 L3.4 8.4 L1 8.4Z" fill="#22b822"/><path d="M8 3.6 Q9.6 6 8 8.4 M10 1.6 Q12.8 6 10 10.4" fill="none" stroke="#22b822" stroke-width="1.3"/></svg>
<div class="box" style="left:316.10px;top:388px;width:23.6px;height:11.5px;font-size:6.6px;line-height:9.6px;border-color:#8a9088;color:#44443a">0. 0dB</div>
<div class="t k" style="left:292.50px;top:408.6px;font-size:8.9px;color:#15191e">延时:</div>
<div class="box" style="left:316.10px;top:407.6px;width:23.6px;height:12px;font-size:6.6px;line-height:10px;border-color:#8a9088;color:#44443a">0. 000</div>
<div class="btn" style="left:346.58px;top:298.5px;width:46.5px;height:12px;line-height:12.2px;font-size:9.4px;letter-spacing:-.2px">CH7</div>
<div class="ab" style="left:346.38px;top:317px;width:47.2px;height:11.7px;background:linear-gradient(#3f8b8d,#388184);border:1px solid #32504f"></div>
<div class="t" style="left:346.88px;top:319.6px;font-size:7px;transform:scaleX(1.08);transform-origin:0 0;-webkit-text-stroke:.2px #000;color:#000">前置左全频</div>
<svg class="ab" style="left:387.98px;top:321.3px" width="5" height="4" viewBox="0 0 5 4"><path d="M0.2 .2 L4.4 .2 L2.3 3.6Z" fill="#7e6c6e"/></svg>
<svg class="ab" style="left:363.46px;top:345px" width="8" height="54" viewBox="0 0 8 54"><defs><linearGradient id="rg6" x1="0" x2="1"><stop offset="0" stop-color="#8a9094"/><stop offset=".8" stop-color="#c6ccd0"/><stop offset="1" stop-color="#7a8286"/></linearGradient></defs><path d="M0 0 L6.4 0 L4.4 53 L0 53Z" fill="url(#rg6)"/><rect x="0.1" y="0" width="2.3" height="52.5" fill="#22160c"/></svg>
<div class="ab" style="left:358.26px;top:342.20px;width:4.6px;height:0.85px;background:#434a4f"></div>
<div class="ab" style="left:360.26px;top:345.86px;width:2.6px;height:0.85px;background:#434a4f"></div>
<div class="ab" style="left:360.26px;top:349.52px;width:2.6px;height:0.85px;background:#434a4f"></div>
<div class="ab" style="left:360.26px;top:353.18px;width:2.6px;height:0.85px;background:#434a4f"></div>
<div class="ab" style="left:360.26px;top:356.84px;width:2.6px;height:0.85px;background:#434a4f"></div>
<div class="ab" style="left:358.26px;top:360.50px;width:4.6px;height:0.85px;background:#434a4f"></div>
<div class="ab" style="left:360.26px;top:364.16px;width:2.6px;height:0.85px;background:#434a4f"></div>
<div class="ab" style="left:360.26px;top:367.82px;width:2.6px;height:0.85px;background:#434a4f"></div>
<div class="ab" style="left:360.26px;top:371.48px;width:2.6px;height:0.85px;background:#434a4f"></div>
<div class="ab" style="left:360.26px;top:375.14px;width:2.6px;height:0.85px;background:#434a4f"></div>
<div class="ab" style="left:358.26px;top:378.80px;width:4.6px;height:0.85px;background:#434a4f"></div>
<div class="ab" style="left:360.26px;top:382.46px;width:2.6px;height:0.85px;background:#434a4f"></div>
<div class="ab" style="left:360.26px;top:386.12px;width:2.6px;height:0.85px;background:#434a4f"></div>
<div class="ab" style="left:360.26px;top:389.78px;width:2.6px;height:0.85px;background:#434a4f"></div>
<div class="ab" style="left:360.26px;top:393.44px;width:2.6px;height:0.85px;background:#434a4f"></div>
<div class="ab" style="left:358.26px;top:397.10px;width:4.6px;height:0.85px;background:#434a4f"></div>
<div class="t" style="left:331.86px;width:25.70px;text-align:right;top:340.50px;font-size:6.6px;font-weight:bold;color:#0e1114">0</div>
<div class="t" style="left:331.86px;width:26.10px;text-align:right;top:358.90px;font-size:6.6px;font-weight:bold;color:#0e1114">-20</div>
<div class="t" style="left:331.86px;width:26.10px;text-align:right;top:377.10px;font-size:6.6px;font-weight:bold;color:#0e1114">-40</div>
<div class="t" style="left:331.86px;width:25.70px;text-align:right;top:395.40px;font-size:6.6px;font-weight:bold;color:#0e1114">OFF</div>
<div class="ab" style="left:359.96px;top:335.9px;width:9.6px;height:12.9px;background:linear-gradient(#a6acb0,#8e9498 45%,#6c7276);border-right:1.2px solid #30353a;border-bottom:1px solid #30353a;border-radius:1px"></div>
<div class="ab" style="left:360.36px;top:341.8px;width:8px;height:1.6px;background:#e6eaeb"></div>
<div class="t k" style="left:375.16px;top:342.6px;font-size:8.1px;color:#15191e">正相</div>
<svg class="ab" style="left:377.36px;top:365px" width="14" height="12" viewBox="0 0 14 12"><path d="M1 3.6 L3.4 3.6 L6.4 1 L6.4 11 L3.4 8.4 L1 8.4Z" fill="#22b822"/><path d="M8 3.6 Q9.6 6 8 8.4 M10 1.6 Q12.8 6 10 10.4" fill="none" stroke="#22b822" stroke-width="1.3"/></svg>
<div class="box" style="left:372.16px;top:388px;width:23.6px;height:11.5px;font-size:6.6px;line-height:9.6px;border-color:#8a9088;color:#44443a">0. 0dB</div>
<div class="t k" style="left:348.56px;top:408.6px;font-size:8.9px;color:#15191e">延时:</div>
<div class="box" style="left:372.16px;top:407.6px;width:23.6px;height:12px;font-size:6.6px;line-height:10px;border-color:#8a9088;color:#44443a">0. 000</div>
<div class="btn" style="left:402.56px;top:298.5px;width:46.5px;height:12px;line-height:12.2px;font-size:9.4px;letter-spacing:-.2px">CH8</div>
<div class="ab" style="left:402.36px;top:317px;width:47.2px;height:11.7px;background:linear-gradient(#3f8b8d,#388184);border:1px solid #32504f"></div>
<div class="t" style="left:402.86px;top:319.6px;font-size:7px;transform:scaleX(1.08);transform-origin:0 0;-webkit-text-stroke:.2px #000;color:#000">前置左全频</div>
<svg class="ab" style="left:443.96px;top:321.3px" width="5" height="4" viewBox="0 0 5 4"><path d="M0.2 .2 L4.4 .2 L2.3 3.6Z" fill="#7e6c6e"/></svg>
<svg class="ab" style="left:419.52px;top:345px" width="8" height="54" viewBox="0 0 8 54"><defs><linearGradient id="rg7" x1="0" x2="1"><stop offset="0" stop-color="#8a9094"/><stop offset=".8" stop-color="#c6ccd0"/><stop offset="1" stop-color="#7a8286"/></linearGradient></defs><path d="M0 0 L6.4 0 L4.4 53 L0 53Z" fill="url(#rg7)"/><rect x="0.1" y="0" width="2.3" height="52.5" fill="#22160c"/></svg>
<div class="ab" style="left:414.32px;top:342.20px;width:4.6px;height:0.85px;background:#434a4f"></div>
<div class="ab" style="left:416.32px;top:345.86px;width:2.6px;height:0.85px;background:#434a4f"></div>
<div class="ab" style="left:416.32px;top:349.52px;width:2.6px;height:0.85px;background:#434a4f"></div>
<div class="ab" style="left:416.32px;top:353.18px;width:2.6px;height:0.85px;background:#434a4f"></div>
<div class="ab" style="left:416.32px;top:356.84px;width:2.6px;height:0.85px;background:#434a4f"></div>
<div class="ab" style="left:414.32px;top:360.50px;width:4.6px;height:0.85px;background:#434a4f"></div>
<div class="ab" style="left:416.32px;top:364.16px;width:2.6px;height:0.85px;background:#434a4f"></div>
<div class="ab" style="left:416.32px;top:367.82px;width:2.6px;height:0.85px;background:#434a4f"></div>
<div class="ab" style="left:416.32px;top:371.48px;width:2.6px;height:0.85px;background:#434a4f"></div>
<div class="ab" style="left:416.32px;top:375.14px;width:2.6px;height:0.85px;background:#434a4f"></div>
<div class="ab" style="left:414.32px;top:378.80px;width:4.6px;height:0.85px;background:#434a4f"></div>
<div class="ab" style="left:416.32px;top:382.46px;width:2.6px;height:0.85px;background:#434a4f"></div>
<div class="ab" style="left:416.32px;top:386.12px;width:2.6px;height:0.85px;background:#434a4f"></div>
<div class="ab" style="left:416.32px;top:389.78px;width:2.6px;height:0.85px;background:#434a4f"></div>
<div class="ab" style="left:416.32px;top:393.44px;width:2.6px;height:0.85px;background:#434a4f"></div>
<div class="ab" style="left:414.32px;top:397.10px;width:4.6px;height:0.85px;background:#434a4f"></div>
<div class="t" style="left:387.92px;width:25.70px;text-align:right;top:340.50px;font-size:6.6px;font-weight:bold;color:#0e1114">0</div>
<div class="t" style="left:387.92px;width:26.10px;text-align:right;top:358.90px;font-size:6.6px;font-weight:bold;color:#0e1114">-20</div>
<div class="t" style="left:387.92px;width:26.10px;text-align:right;top:377.10px;font-size:6.6px;font-weight:bold;color:#0e1114">-40</div>
<div class="t" style="left:387.92px;width:25.70px;text-align:right;top:395.40px;font-size:6.6px;font-weight:bold;color:#0e1114">OFF</div>
<div class="ab" style="left:416.02px;top:335.9px;width:9.6px;height:12.9px;background:linear-gradient(#a6acb0,#8e9498 45%,#6c7276);border-right:1.2px solid #30353a;border-bottom:1px solid #30353a;border-radius:1px"></div>
<div class="ab" style="left:416.42px;top:341.8px;width:8px;height:1.6px;background:#e6eaeb"></div>
<div class="t k" style="left:431.22px;top:342.6px;font-size:8.1px;color:#15191e">正相</div>
<svg class="ab" style="left:433.42px;top:365px" width="14" height="12" viewBox="0 0 14 12"><path d="M1 3.6 L3.4 3.6 L6.4 1 L6.4 11 L3.4 8.4 L1 8.4Z" fill="#22b822"/><path d="M8 3.6 Q9.6 6 8 8.4 M10 1.6 Q12.8 6 10 10.4" fill="none" stroke="#22b822" stroke-width="1.3"/></svg>
<div class="box" style="left:428.22px;top:388px;width:23.6px;height:11.5px;font-size:6.6px;line-height:9.6px;border-color:#8a9088;color:#44443a">0. 0dB</div>
<div class="t k" style="left:404.62px;top:408.6px;font-size:8.9px;color:#15191e">延时:</div>
<div class="box" style="left:428.22px;top:407.6px;width:23.6px;height:12px;font-size:6.6px;line-height:10px;border-color:#8a9088;color:#44443a">0. 000</div>
<div class="btn" style="left:458.54px;top:298.5px;width:46.5px;height:12px;line-height:12.2px;font-size:9.4px;letter-spacing:-.2px">CH9</div>
<div class="ab" style="left:458.34px;top:317px;width:47.2px;height:11.7px;background:linear-gradient(#3f8b8d,#388184);border:1px solid #32504f"></div>
<div class="t" style="left:458.84px;top:319.6px;font-size:7px;transform:scaleX(1.08);transform-origin:0 0;-webkit-text-stroke:.2px #000;color:#000">前置左全频</div>
<svg class="ab" style="left:499.94px;top:321.3px" width="5" height="4" viewBox="0 0 5 4"><path d="M0.2 .2 L4.4 .2 L2.3 3.6Z" fill="#7e6c6e"/></svg>
<svg class="ab" style="left:475.58px;top:345px" width="8" height="54" viewBox="0 0 8 54"><defs><linearGradient id="rg8" x1="0" x2="1"><stop offset="0" stop-color="#8a9094"/><stop offset=".8" stop-color="#c6ccd0"/><stop offset="1" stop-color="#7a8286"/></linearGradient></defs><path d="M0 0 L6.4 0 L4.4 53 L0 53Z" fill="url(#rg8)"/><rect x="0.1" y="0" width="2.3" height="52.5" fill="#22160c"/></svg>
<div class="ab" style="left:470.38px;top:342.20px;width:4.6px;height:0.85px;background:#434a4f"></div>
<div class="ab" style="left:472.38px;top:345.86px;width:2.6px;height:0.85px;background:#434a4f"></div>
<div class="ab" style="left:472.38px;top:349.52px;width:2.6px;height:0.85px;background:#434a4f"></div>
<div class="ab" style="left:472.38px;top:353.18px;width:2.6px;height:0.85px;background:#434a4f"></div>
<div class="ab" style="left:472.38px;top:356.84px;width:2.6px;height:0.85px;background:#434a4f"></div>
<div class="ab" style="left:470.38px;top:360.50px;width:4.6px;height:0.85px;background:#434a4f"></div>
<div class="ab" style="left:472.38px;top:364.16px;width:2.6px;height:0.85px;background:#434a4f"></div>
<div class="ab" style="left:472.38px;top:367.82px;width:2.6px;height:0.85px;background:#434a4f"></div>
<div class="ab" style="left:472.38px;top:371.48px;width:2.6px;height:0.85px;background:#434a4f"></div>
<div class="ab" style="left:472.38px;top:375.14px;width:2.6px;height:0.85px;background:#434a4f"></div>
<div class="ab" style="left:470.38px;top:378.80px;width:4.6px;height:0.85px;background:#434a4f"></div>
<div class="ab" style="left:472.38px;top:382.46px;width:2.6px;height:0.85px;background:#434a4f"></div>
<div class="ab" style="left:472.38px;top:386.12px;width:2.6px;height:0.85px;background:#434a4f"></div>
<div class="ab" style="left:472.38px;top:389.78px;width:2.6px;height:0.85px;background:#434a4f"></div>
<div class="ab" style="left:472.38px;top:393.44px;width:2.6px;height:0.85px;background:#434a4f"></div>
<div class="ab" style="left:470.38px;top:397.10px;width:4.6px;height:0.85px;background:#434a4f"></div>
<div class="t" style="left:443.98px;width:25.70px;text-align:right;top:340.50px;font-size:6.6px;font-weight:bold;color:#0e1114">0</div>
<div class="t" style="left:443.98px;width:26.10px;text-align:right;top:358.90px;font-size:6.6px;font-weight:bold;color:#0e1114">-20</div>
<div class="t" style="left:443.98px;width:26.10px;text-align:right;top:377.10px;font-size:6.6px;font-weight:bold;color:#0e1114">-40</div>
<div class="t" style="left:443.98px;width:25.70px;text-align:right;top:395.40px;font-size:6.6px;font-weight:bold;color:#0e1114">OFF</div>
<div class="ab" style="left:472.08px;top:335.9px;width:9.6px;height:12.9px;background:linear-gradient(#a6acb0,#8e9498 45%,#6c7276);border-right:1.2px solid #30353a;border-bottom:1px solid #30353a;border-radius:1px"></div>
<div class="ab" style="left:472.48px;top:341.8px;width:8px;height:1.6px;background:#e6eaeb"></div>
<div class="t k" style="left:487.28px;top:342.6px;font-size:8.1px;color:#15191e">正相</div>
<svg class="ab" style="left:489.48px;top:365px" width="14" height="12" viewBox="0 0 14 12"><path d="M1 3.6 L3.4 3.6 L6.4 1 L6.4 11 L3.4 8.4 L1 8.4Z" fill="#22b822"/><path d="M8 3.6 Q9.6 6 8 8.4 M10 1.6 Q12.8 6 10 10.4" fill="none" stroke="#22b822" stroke-width="1.3"/></svg>
<div class="box" style="left:484.28px;top:388px;width:23.6px;height:11.5px;font-size:6.6px;line-height:9.6px;border-color:#8a9088;color:#44443a">0. 0dB</div>
<div class="t k" style="left:460.68px;top:408.6px;font-size:8.9px;color:#15191e">延时:</div>
<div class="box" style="left:484.28px;top:407.6px;width:23.6px;height:12px;font-size:6.6px;line-height:10px;border-color:#8a9088;color:#44443a">0. 000</div>
<div class="btn" style="left:514.52px;top:298.5px;width:46.5px;height:12px;line-height:12.2px;font-size:9.4px;letter-spacing:-.2px">CH10</div>
<div class="ab" style="left:514.32px;top:317px;width:47.2px;height:11.7px;background:linear-gradient(#3f8b8d,#388184);border:1px solid #32504f"></div>
<div class="t" style="left:514.82px;top:319.6px;font-size:7px;transform:scaleX(1.08);transform-origin:0 0;-webkit-text-stroke:.2px #000;color:#000">前置左全频</div>
<svg class="ab" style="left:555.92px;top:321.3px" width="5" height="4" viewBox="0 0 5 4"><path d="M0.2 .2 L4.4 .2 L2.3 3.6Z" fill="#7e6c6e"/></svg>
<svg class="ab" style="left:531.64px;top:345px" width="8" height="54" viewBox="0 0 8 54"><defs><linearGradient id="rg9" x1="0" x2="1"><stop offset="0" stop-color="#8a9094"/><stop offset=".8" stop-color="#c6ccd0"/><stop offset="1" stop-color="#7a8286"/></linearGradient></defs><path d="M0 0 L6.4 0 L4.4 53 L0 53Z" fill="url(#rg9)"/><rect x="0.1" y="0" width="2.3" height="52.5" fill="#22160c"/></svg>
<div class="ab" style="left:526.44px;top:342.20px;width:4.6px;height:0.85px;background:#434a4f"></div>
<div class="ab" style="left:528.44px;top:345.86px;width:2.6px;height:0.85px;background:#434a4f"></div>
<div class="ab" style="left:528.44px;top:349.52px;width:2.6px;height:0.85px;background:#434a4f"></div>
<div class="ab" style="left:528.44px;top:353.18px;width:2.6px;height:0.85px;background:#434a4f"></div>
<div class="ab" style="left:528.44px;top:356.84px;width:2.6px;height:0.85px;background:#434a4f"></div>
<div class="ab" style="left:526.44px;top:360.50px;width:4.6px;height:0.85px;background:#434a4f"></div>
<div class="ab" style="left:528.44px;top:364.16px;width:2.6px;height:0.85px;background:#434a4f"></div>
<div class="ab" style="left:528.44px;top:367.82px;width:2.6px;height:0.85px;background:#434a4f"></div>
<div class="ab" style="left:528.44px;top:371.48px;width:2.6px;height:0.85px;background:#434a4f"></div>
<div class="ab" style="left:528.44px;top:375.14px;width:2.6px;height:0.85px;background:#434a4f"></div>
<div class="ab" style="left:526.44px;top:378.80px;width:4.6px;height:0.85px;background:#434a4f"></div>
<div class="ab" style="left:528.44px;top:382.46px;width:2.6px;height:0.85px;background:#434a4f"></div>
<div class="ab" style="left:528.44px;top:386.12px;width:2.6px;height:0.85px;background:#434a4f"></div>
<div class="ab" style="left:528.44px;top:389.78px;width:2.6px;height:0.85px;background:#434a4f"></div>
<div class="ab" style="left:528.44px;top:393.44px;width:2.6px;height:0.85px;background:#434a4f"></div>
<div class="ab" style="left:526.44px;top:397.10px;width:4.6px;height:0.85px;background:#434a4f"></div>
<div class="t" style="left:500.04px;width:25.70px;text-align:right;top:340.50px;font-size:6.6px;font-weight:bold;color:#0e1114">0</div>
<div class="t" style="left:500.04px;width:26.10px;text-align:right;top:358.90px;font-size:6.6px;font-weight:bold;color:#0e1114">-20</div>
<div class="t" style="left:500.04px;width:26.10px;text-align:right;top:377.10px;font-size:6.6px;font-weight:bold;color:#0e1114">-40</div>
<div class="t" style="left:500.04px;width:25.70px;text-align:right;top:395.40px;font-size:6.6px;font-weight:bold;color:#0e1114">OFF</div>
<div class="ab" style="left:528.14px;top:335.9px;width:9.6px;height:12.9px;background:linear-gradient(#a6acb0,#8e9498 45%,#6c7276);border-right:1.2px solid #30353a;border-bottom:1px solid #30353a;border-radius:1px"></div>
<div class="ab" style="left:528.54px;top:341.8px;width:8px;height:1.6px;background:#e6eaeb"></div>
<div class="t k" style="left:543.34px;top:342.6px;font-size:8.1px;color:#15191e">正相</div>
<svg class="ab" style="left:545.54px;top:365px" width="14" height="12" viewBox="0 0 14 12"><path d="M1 3.6 L3.4 3.6 L6.4 1 L6.4 11 L3.4 8.4 L1 8.4Z" fill="#22b822"/><path d="M8 3.6 Q9.6 6 8 8.4 M10 1.6 Q12.8 6 10 10.4" fill="none" stroke="#22b822" stroke-width="1.3"/></svg>
<div class="box" style="left:540.34px;top:388px;width:23.6px;height:11.5px;font-size:6.6px;line-height:9.6px;border-color:#8a9088;color:#44443a">0. 0dB</div>
<div class="t k" style="left:516.74px;top:408.6px;font-size:8.9px;color:#15191e">延时:</div>
<div class="box" style="left:540.34px;top:407.6px;width:23.6px;height:12px;font-size:6.6px;line-height:10px;border-color:#8a9088;color:#44443a">0. 000</div>
<div class="btn" style="left:570.50px;top:298.5px;width:46.5px;height:12px;line-height:12.2px;font-size:9.4px;letter-spacing:-.2px">CH11</div>
<div class="ab" style="left:570.30px;top:317px;width:47.2px;height:11.7px;background:linear-gradient(#3f8b8d,#388184);border:1px solid #32504f"></div>
<div class="t" style="left:570.80px;top:319.6px;font-size:7px;transform:scaleX(1.08);transform-origin:0 0;-webkit-text-stroke:.2px #000;color:#000">前置左全频</div>
<svg class="ab" style="left:611.90px;top:321.3px" width="5" height="4" viewBox="0 0 5 4"><path d="M0.2 .2 L4.4 .2 L2.3 3.6Z" fill="#7e6c6e"/></svg>
<svg class="ab" style="left:587.70px;top:345px" width="8" height="54" viewBox="0 0 8 54"><defs><linearGradient id="rg10" x1="0" x2="1"><stop offset="0" stop-color="#8a9094"/><stop offset=".8" stop-color="#c6ccd0"/><stop offset="1" stop-color="#7a8286"/></linearGradient></defs><path d="M0 0 L6.4 0 L4.4 53 L0 53Z" fill="url(#rg10)"/><rect x="0.1" y="0" width="2.3" height="52.5" fill="#22160c"/></svg>
<div class="ab" style="left:582.50px;top:342.20px;width:4.6px;height:0.85px;background:#434a4f"></div>
<div class="ab" style="left:584.50px;top:345.86px;width:2.6px;height:0.85px;background:#434a4f"></div>
<div class="ab" style="left:584.50px;top:349.52px;width:2.6px;height:0.85px;background:#434a4f"></div>
<div class="ab" style="left:584.50px;top:353.18px;width:2.6px;height:0.85px;background:#434a4f"></div>
<div class="ab" style="left:584.50px;top:356.84px;width:2.6px;height:0.85px;background:#434a4f"></div>
<div class="ab" style="left:582.50px;top:360.50px;width:4.6px;height:0.85px;background:#434a4f"></div>
<div class="ab" style="left:584.50px;top:364.16px;width:2.6px;height:0.85px;background:#434a4f"></div>
<div class="ab" style="left:584.50px;top:367.82px;width:2.6px;height:0.85px;background:#434a4f"></div>
<div class="ab" style="left:584.50px;top:371.48px;width:2.6px;height:0.85px;background:#434a4f"></div>
<div class="ab" style="left:584.50px;top:375.14px;width:2.6px;height:0.85px;background:#434a4f"></div>
<div class="ab" style="left:582.50px;top:378.80px;width:4.6px;height:0.85px;background:#434a4f"></div>
<div class="ab" style="left:584.50px;top:382.46px;width:2.6px;height:0.85px;background:#434a4f"></div>
<div class="ab" style="left:584.50px;top:386.12px;width:2.6px;height:0.85px;background:#434a4f"></div>
<div class="ab" style="left:584.50px;top:389.78px;width:2.6px;height:0.85px;background:#434a4f"></div>
<div class="ab" style="left:584.50px;top:393.44px;width:2.6px;height:0.85px;background:#434a4f"></div>
<div class="ab" style="left:582.50px;top:397.10px;width:4.6px;height:0.85px;background:#434a4f"></div>
<div class="t" style="left:556.10px;width:25.70px;text-align:right;top:340.50px;font-size:6.6px;font-weight:bold;color:#0e1114">0</div>
<div class="t" style="left:556.10px;width:26.10px;text-align:right;top:358.90px;font-size:6.6px;font-weight:bold;color:#0e1114">-20</div>
<div class="t" style="left:556.10px;width:26.10px;text-align:right;top:377.10px;font-size:6.6px;font-weight:bold;color:#0e1114">-40</div>
<div class="t" style="left:556.10px;width:25.70px;text-align:right;top:395.40px;font-size:6.6px;font-weight:bold;color:#0e1114">OFF</div>
<div class="ab" style="left:584.20px;top:335.9px;width:9.6px;height:12.9px;background:linear-gradient(#a6acb0,#8e9498 45%,#6c7276);border-right:1.2px solid #30353a;border-bottom:1px solid #30353a;border-radius:1px"></div>
<div class="ab" style="left:584.60px;top:341.8px;width:8px;height:1.6px;background:#e6eaeb"></div>
<div class="t k" style="left:599.40px;top:342.6px;font-size:8.1px;color:#15191e">正相</div>
<svg class="ab" style="left:601.60px;top:365px" width="14" height="12" viewBox="0 0 14 12"><path d="M1 3.6 L3.4 3.6 L6.4 1 L6.4 11 L3.4 8.4 L1 8.4Z" fill="#22b822"/><path d="M8 3.6 Q9.6 6 8 8.4 M10 1.6 Q12.8 6 10 10.4" fill="none" stroke="#22b822" stroke-width="1.3"/></svg>
<div class="box" style="left:596.40px;top:388px;width:23.6px;height:11.5px;font-size:6.6px;line-height:9.6px;border-color:#8a9088;color:#44443a">0. 0dB</div>
<div class="t k" style="left:572.80px;top:408.6px;font-size:8.9px;color:#15191e">延时:</div>
<div class="box" style="left:596.40px;top:407.6px;width:23.6px;height:12px;font-size:6.6px;line-height:10px;border-color:#8a9088;color:#44443a">0. 000</div>
<div class="btn" style="left:626.48px;top:298.5px;width:46.5px;height:12px;line-height:12.2px;font-size:9.4px;letter-spacing:-.2px">CH12</div>
<div class="ab" style="left:626.28px;top:317px;width:47.2px;height:11.7px;background:linear-gradient(#3f8b8d,#388184);border:1px solid #32504f"></div>
<div class="t" style="left:626.78px;top:319.6px;font-size:7px;transform:scaleX(1.08);transform-origin:0 0;-webkit-text-stroke:.2px #000;color:#000">前置左全频</div>
<svg class="ab" style="left:667.88px;top:321.3px" width="5" height="4" viewBox="0 0 5 4"><path d="M0.2 .2 L4.4 .2 L2.3 3.6Z" fill="#7e6c6e"/></svg>
<svg class="ab" style="left:643.76px;top:345px" width="8" height="54" viewBox="0 0 8 54"><defs><linearGradient id="rg11" x1="0" x2="1"><stop offset="0" stop-color="#8a9094"/><stop offset=".8" stop-color="#c6ccd0"/><stop offset="1" stop-color="#7a8286"/></linearGradient></defs><path d="M0 0 L6.4 0 L4.4 53 L0 53Z" fill="url(#rg11)"/><rect x="0.1" y="0" width="2.3" height="52.5" fill="#22160c"/></svg>
<div class="ab" style="left:638.56px;top:342.20px;width:4.6px;height:0.85px;background:#434a4f"></div>
<div class="ab" style="left:640.56px;top:345.86px;width:2.6px;height:0.85px;background:#434a4f"></div>
<div class="ab" style="left:640.56px;top:349.52px;width:2.6px;height:0.85px;background:#434a4f"></div>
<div class="ab" style="left:640.56px;top:353.18px;width:2.6px;height:0.85px;background:#434a4f"></div>
<div class="ab" style="left:640.56px;top:356.84px;width:2.6px;height:0.85px;background:#434a4f"></div>
<div class="ab" style="left:638.56px;top:360.50px;width:4.6px;height:0.85px;background:#434a4f"></div>
<div class="ab" style="left:640.56px;top:364.16px;width:2.6px;height:0.85px;background:#434a4f"></div>
<div class="ab" style="left:640.56px;top:367.82px;width:2.6px;height:0.85px;background:#434a4f"></div>
<div class="ab" style="left:640.56px;top:371.48px;width:2.6px;height:0.85px;background:#434a4f"></div>
<div class="ab" style="left:640.56px;top:375.14px;width:2.6px;height:0.85px;background:#434a4f"></div>
<div class="ab" style="left:638.56px;top:378.80px;width:4.6px;height:0.85px;background:#434a4f"></div>
<div class="ab" style="left:640.56px;top:382.46px;width:2.6px;height:0.85px;background:#434a4f"></div>
<div class="ab" style="left:640.56px;top:386.12px;width:2.6px;height:0.85px;background:#434a4f"></div>
<div class="ab" style="left:640.56px;top:389.78px;width:2.6px;height:0.85px;background:#434a4f"></div>
<div class="ab" style="left:640.56px;top:393.44px;width:2.6px;height:0.85px;background:#434a4f"></div>
<div class="ab" style="left:638.56px;top:397.10px;width:4.6px;height:0.85px;background:#434a4f"></div>
<div class="t" style="left:612.16px;width:25.70px;text-align:right;top:340.50px;font-size:6.6px;font-weight:bold;color:#0e1114">0</div>
<div class="t" style="left:612.16px;width:26.10px;text-align:right;top:358.90px;font-size:6.6px;font-weight:bold;color:#0e1114">-20</div>
<div class="t" style="left:612.16px;width:26.10px;text-align:right;top:377.10px;font-size:6.6px;font-weight:bold;color:#0e1114">-40</div>
<div class="t" style="left:612.16px;width:25.70px;text-align:right;top:395.40px;font-size:6.6px;font-weight:bold;color:#0e1114">OFF</div>
<div class="ab" style="left:640.26px;top:335.9px;width:9.6px;height:12.9px;background:linear-gradient(#a6acb0,#8e9498 45%,#6c7276);border-right:1.2px solid #30353a;border-bottom:1px solid #30353a;border-radius:1px"></div>
<div class="ab" style="left:640.66px;top:341.8px;width:8px;height:1.6px;background:#e6eaeb"></div>
<div class="t k" style="left:655.46px;top:342.6px;font-size:8.1px;color:#15191e">正相</div>
<svg class="ab" style="left:657.66px;top:365px" width="14" height="12" viewBox="0 0 14 12"><path d="M1 3.6 L3.4 3.6 L6.4 1 L6.4 11 L3.4 8.4 L1 8.4Z" fill="#22b822"/><path d="M8 3.6 Q9.6 6 8 8.4 M10 1.6 Q12.8 6 10 10.4" fill="none" stroke="#22b822" stroke-width="1.3"/></svg>
<div class="box" style="left:652.46px;top:388px;width:23.6px;height:11.5px;font-size:6.6px;line-height:9.6px;border-color:#8a9088;color:#44443a">0. 0dB</div>
<div class="t k" style="left:628.86px;top:408.6px;font-size:8.9px;color:#15191e">延时:</div>
<div class="box" style="left:652.46px;top:407.6px;width:23.6px;height:12px;font-size:6.6px;line-height:10px;border-color:#8a9088;color:#44443a">0. 000</div>
<div class="btn" style="left:10px;top:428.5px;width:46.7px;height:12.1px;line-height:12.6px;font-size:10px">配置关锁</div>
<div class="t" style="left:67.4px;top:431.2px;font-size:7.9px;color:#1a1f26">输出联调</div>
<div class="ab" style="left:108.15px;top:430px;width:9px;height:8.8px;border:1.1px solid #5e666c;border-right-color:#cdd5da;border-bottom-color:#cdd5da;background:#acbac3"></div>
<div class="t" style="left:119.35px;top:430.4px;font-size:10px;transform:scaleX(.9);transform-origin:0 0;color:#1a1f26">CH1</div>
<div class="ab" style="left:155.65px;top:430px;width:9px;height:8.8px;border:1.1px solid #5e666c;border-right-color:#cdd5da;border-bottom-color:#cdd5da;background:#acbac3"></div>
<div class="t" style="left:166.85px;top:430.4px;font-size:10px;transform:scaleX(.9);transform-origin:0 0;color:#1a1f26">CH2</div>
<div class="ab" style="left:203.15px;top:430px;width:9px;height:8.8px;border:1.1px solid #5e666c;border-right-color:#cdd5da;border-bottom-color:#cdd5da;background:#acbac3"></div>
<div class="t" style="left:214.35px;top:430.4px;font-size:10px;transform:scaleX(.9);transform-origin:0 0;color:#1a1f26">CH3</div>
<div class="ab" style="left:250.65px;top:430px;width:9px;height:8.8px;border:1.1px solid #5e666c;border-right-color:#cdd5da;border-bottom-color:#cdd5da;background:#acbac3"></div>
<div class="t" style="left:261.85px;top:430.4px;font-size:10px;transform:scaleX(.9);transform-origin:0 0;color:#1a1f26">CH4</div>
<div class="ab" style="left:298.15px;top:430px;width:9px;height:8.8px;border:1.1px solid #5e666c;border-right-color:#cdd5da;border-bottom-color:#cdd5da;background:#acbac3"></div>
<div class="t" style="left:309.35px;top:430.4px;font-size:10px;transform:scaleX(.9);transform-origin:0 0;color:#1a1f26">CH5</div>
<div class="ab" style="left:345.65px;top:430px;width:9px;height:8.8px;border:1.1px solid #5e666c;border-right-color:#cdd5da;border-bottom-color:#cdd5da;background:#acbac3"></div>
<div class="t" style="left:356.85px;top:430.4px;font-size:10px;transform:scaleX(.9);transform-origin:0 0;color:#1a1f26">CH6</div>
<div class="ab" style="left:393.15px;top:430px;width:9px;height:8.8px;border:1.1px solid #5e666c;border-right-color:#cdd5da;border-bottom-color:#cdd5da;background:#acbac3"></div>
<div class="t" style="left:404.35px;top:430.4px;font-size:10px;transform:scaleX(.9);transform-origin:0 0;color:#1a1f26">CH7</div>
<div class="ab" style="left:440.65px;top:430px;width:9px;height:8.8px;border:1.1px solid #5e666c;border-right-color:#cdd5da;border-bottom-color:#cdd5da;background:#acbac3"></div>
<div class="t" style="left:451.85px;top:430.4px;font-size:10px;transform:scaleX(.9);transform-origin:0 0;color:#1a1f26">CH8</div>
<div class="ab" style="left:488.15px;top:430px;width:9px;height:8.8px;border:1.1px solid #5e666c;border-right-color:#cdd5da;border-bottom-color:#cdd5da;background:#acbac3"></div>
<div class="t" style="left:499.35px;top:430.4px;font-size:10px;transform:scaleX(.9);transform-origin:0 0;color:#1a1f26">CH9</div>
<div class="ab" style="left:535.65px;top:430px;width:9px;height:8.8px;border:1.1px solid #5e666c;border-right-color:#cdd5da;border-bottom-color:#cdd5da;background:#acbac3"></div>
<div class="t" style="left:546.85px;top:430.4px;font-size:10px;transform:scaleX(.9);transform-origin:0 0;color:#1a1f26">CH10</div>
<div class="ab" style="left:583.15px;top:430px;width:9px;height:8.8px;border:1.1px solid #5e666c;border-right-color:#cdd5da;border-bottom-color:#cdd5da;background:#acbac3"></div>
<div class="t" style="left:594.35px;top:430.4px;font-size:10px;transform:scaleX(.9);transform-origin:0 0;color:#1a1f26">CH11</div>
<div class="ab" style="left:630.65px;top:430px;width:9px;height:8.8px;border:1.1px solid #5e666c;border-right-color:#cdd5da;border-bottom-color:#cdd5da;background:#acbac3"></div>
<div class="t" style="left:641.85px;top:430.4px;font-size:10px;transform:scaleX(.9);transform-origin:0 0;color:#1a1f26">CH12</div>
<div class="ab" style="left:686.80px;top:297.5px;width:9.8px;height:9.8px;border-radius:50%;background:radial-gradient(circle at 45% 40%,#ff7040,#d83010 60%,#902000);border:1.5px solid #1c1c1c"></div>
<div class="t k" style="left:697.20px;top:299.3px;font-size:8px;color:#1a1f26">毫秒</div>
<div class="ab" style="left:724.30px;top:297.5px;width:9.8px;height:9.8px;border-radius:50%;background:radial-gradient(circle at 45% 40%,#b0b0b0,#707070 60%,#505050);border:1.5px solid #1c1c1c"></div>
<div class="t k" style="left:734.70px;top:299.3px;font-size:8px;color:#1a1f26">厘米</div>
<div class="ab" style="left:761.80px;top:297.5px;width:9.8px;height:9.8px;border-radius:50%;background:radial-gradient(circle at 45% 40%,#b0b0b0,#707070 60%,#505050);border:1.5px solid #1c1c1c"></div>
<div class="t k" style="left:772.20px;top:299.3px;font-size:8px;color:#1a1f26">英寸</div>
<svg class="ab" style="left:695px;top:350px" width="16" height="26" viewBox="0 0 16 26"><rect x="6" y="8.1" width="5" height="8.3" rx="1.2" fill="#0c0c0c"/><ellipse cx="12.4" cy="12.8" rx="3.1" ry="7.3" fill="#1a1212"/><ellipse cx="12.6" cy="12.8" rx="1.8" ry="5.9" fill="none" stroke="#1fd4d4" stroke-width="1.7"/><ellipse cx="12.2" cy="12.8" rx=".8" ry="4.2" fill="#0a1a1a"/></svg>
<svg class="ab" style="left:712px;top:318px" width="56" height="116" viewBox="0 0 56 116">
<defs>
<linearGradient id="cb" x1="0" x2="1" y1="0" y2="0"><stop offset="0" stop-color="#505040"/><stop offset=".12" stop-color="#7e7e68"/><stop offset=".5" stop-color="#9a9a84"/><stop offset=".88" stop-color="#7e7e68"/><stop offset="1" stop-color="#505040"/></linearGradient>
<radialGradient id="rf" cx=".5" cy=".5" r=".5"><stop offset="0" stop-color="#d6d6c4"/><stop offset="1" stop-color="#d6d6c4" stop-opacity="0"/></radialGradient>
<linearGradient id="ws" x1="0" x2="1"><stop offset="0" stop-color="#10160f"/><stop offset=".28" stop-color="#3c4a3e"/><stop offset=".5" stop-color="#182019"/><stop offset=".75" stop-color="#4c5a4c"/><stop offset="1" stop-color="#10160f"/></linearGradient>
</defs>
<path d="M0.8 43.6 L6 41.2 L6.2 46.4Z M54.2 43.6 L49 41.2 L48.8 46.4Z" fill="#b8b89e" stroke="#5a5a48" stroke-width=".4"/>
<path d="M27.2 2.2 Q42 2.2 46.8 8.5 Q49 12.5 49 20 L49.2 44 Q49.8 62 49.2 78 Q48.6 98 44.5 105.5 Q36 110.2 27.2 110.2 Q18.4 110.2 9.9 105.5 Q5.8 98 5.2 78 Q4.6 62 5.2 44 L5.4 20 Q5.4 12.5 7.6 8.5 Q12.4 2.2 27.2 2.2Z" fill="url(#cb)" stroke="#525240" stroke-width=".7"/>
<ellipse cx="27" cy="71" rx="11" ry="14" fill="url(#rf)" opacity=".85"/>
<path d="M13 5 Q10 14 11 26 M41.4 5 Q44.4 14 43.4 26 M21 3 Q18.6 12 19.6 22 M33.4 3 Q35.8 12 34.8 22" stroke="#c8c8b2" stroke-width=".7" fill="none" opacity=".55"/>
<path d="M8.4 50 Q7.2 70 8.8 90 M46 50 Q47.2 70 45.6 90" stroke="#46463a" stroke-width=".9" fill="none" opacity=".7"/>
<path d="M8.4 37.2 C14 25.5, 40.4 25.5, 46 37.2 L43.4 48.6 Q27.2 45.8 11 48.6 Z" fill="url(#ws)" stroke="#0c0c0a" stroke-width="1.4"/>
<path d="M10.2 38.6 C15.6 28.4, 38.8 28.4, 44.2 38.6" fill="none" stroke="#8c7c42" stroke-width=".9"/>
<path d="M11 85 Q11 82.4 13.8 82.4 L35 82.4 Q37.8 82.4 37.8 85 L37 90.6 Q24.4 99 11.8 90.6 Z" fill="url(#ws)" stroke="#181814" stroke-width=".9"/>
<path d="M12.6 90.4 Q24.4 97.4 36.2 90.4" fill="none" stroke="#7c6e3c" stroke-width=".9"/>
<circle cx="11.5" cy="98.6" r="1.3" fill="#f4f4f4"/><circle cx="36.6" cy="99.4" r="1.3" fill="#f4f4f4"/>
<circle cx="9.6" cy="105.6" r=".9" fill="#c03030"/><circle cx="40" cy="106.2" r=".9" fill="#c03030"/>
</svg>
</body></html>
